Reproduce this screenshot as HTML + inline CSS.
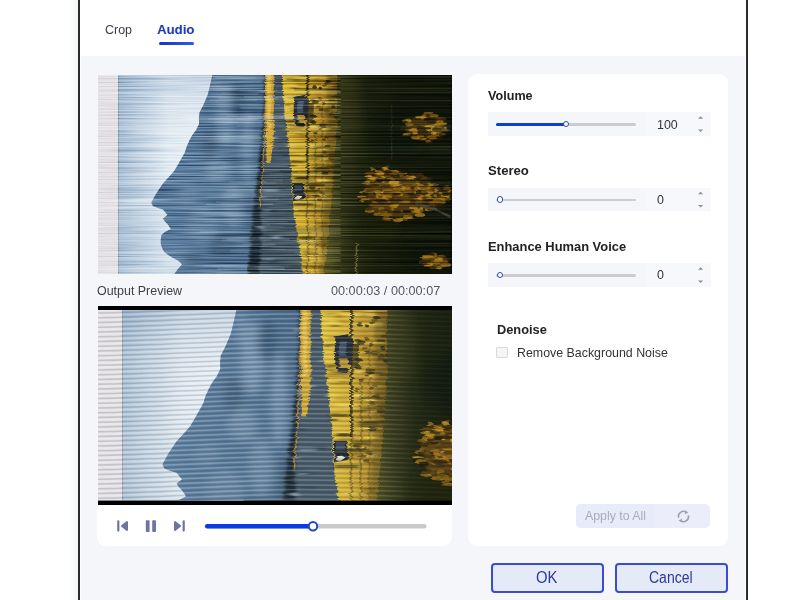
<!DOCTYPE html>
<html>
<head>
<meta charset="utf-8">
<title>Audio</title>
<style>
html,body{margin:0;padding:0;}
body{width:800px;height:600px;overflow:hidden;background:#fff;position:relative;font-family:"Liberation Sans",Arial,sans-serif;font-size:13px;color:#333;}
.abs{position:absolute;}
.t{position:absolute;white-space:nowrap;line-height:16px;transform-origin:left center;transform:scaleX(0.957);}
.b{font-weight:bold;color:#222;transform:scaleX(0.97);}
#shade{left:69px;top:0;width:9px;height:600px;background:linear-gradient(90deg,rgba(243,246,248,0),#f2f5f7);}
#bl{left:78px;top:0;width:2px;height:600px;background:#2b2b2b;}
#br{left:746px;top:0;width:2px;height:600px;background:#2b2b2b;}
#panel{left:81px;top:56px;width:664px;height:544px;background:#f5f6fa;}
#uline{left:159px;top:42px;width:35px;height:3px;border-radius:2px;background:linear-gradient(90deg,#1b33c4,#2c5fe6);}
.card{background:#fff;border-radius:9px;}
#rcard{left:468px;top:74px;width:260px;height:472.3px;}
#ctrl{left:97px;top:504.5px;width:355px;height:41.5px;background:#fff;border-radius:0 0 9px 9px;}
.row{position:absolute;left:488px;width:222.5px;height:23.8px;background:#f5f6fa;}
.num{position:absolute;left:646.5px;width:64px;height:23.8px;background:#f7f8fc;}
.trk{position:absolute;left:496px;width:140px;height:2.8px;border-radius:2px;background:#cbccd0;}
.fill{position:absolute;height:2.8px;border-radius:2px;background:#0c40d4;}
.th{position:absolute;width:4.8px;height:4.8px;border:1.7px solid #2b4aa8;border-radius:50%;background:#fff;}
.btn{position:absolute;box-sizing:border-box;border:2px solid #3b4ccc;border-radius:4px;background:#e4eaf8;height:30px;top:563px;}
</style>
</head>
<body>
<div id="shade" class="abs"></div>
<div id="bl" class="abs"></div>
<div id="br" class="abs"></div>
<div id="panel" class="abs"></div>

<!-- tabs -->
<span class="t" style="left:104.5px;top:22px;color:#3a3d44;">Crop</span>
<span class="t" style="left:157px;top:21.5px;font-weight:bold;color:#1b38b4;font-size:13.2px;transform:none;">Audio</span>
<div id="uline" class="abs"></div>

<!-- top video -->
<!--V1--><svg class="abs" style="left:97.5px;top:75px;" width="354.5" height="199" viewBox="0 0 355 199" preserveAspectRatio="none">
<defs>
<filter id="streak" x="0" y="0" width="100%" height="100%" color-interpolation-filters="sRGB">
<feTurbulence type="fractalNoise" baseFrequency="0.011 0.7" numOctaves="2" seed="11" result="n"/>
<feColorMatrix in="n" type="matrix" values="1.35 0 0 0 -0.175  1.35 0 0 0 -0.175  1.35 0 0 0 -0.175  0 0 0 0 1" result="g"/>
<feBlend in="g" in2="SourceGraphic" mode="soft-light"/>
</filter>
<filter id="streakr" x="0" y="0" width="100%" height="100%" color-interpolation-filters="sRGB">
<feTurbulence type="fractalNoise" baseFrequency="0.004 0.6" numOctaves="2" seed="11" result="n"/>
<feColorMatrix in="n" type="matrix" values="1.0 0 0 0 -0.08  1.0 0 0 0 -0.08  1.0 0 0 0 -0.08  0 0 0 0 1" result="g"/>
<feBlend in="g" in2="SourceGraphic" mode="soft-light"/>
</filter>
<clipPath id="cl"><rect x="0" y="0" width="244" height="199"/></clipPath>
<clipPath id="cr"><rect x="243" y="0" width="112" height="199"/></clipPath>
<symbol id="scene" viewBox="0 0 355 199" preserveAspectRatio="none">
<defs>
<linearGradient id="gsky" x1="0" y1="0" x2="1" y2="0">
<stop offset="0" stop-color="#a4bbd2"/><stop offset="0.22" stop-color="#bfd0e0"/><stop offset="0.5" stop-color="#dfe9f1"/><stop offset="1" stop-color="#eaf0f6"/>
</linearGradient>
<linearGradient id="gsky2" x1="0" y1="0" x2="0" y2="1">
<stop offset="0" stop-color="#829fbd" stop-opacity="0.35"/><stop offset="0.3" stop-color="#ffffff" stop-opacity="0.1"/><stop offset="0.6" stop-color="#ffffff" stop-opacity="0.15"/><stop offset="1" stop-color="#a9bfd4" stop-opacity="0.3"/>
</linearGradient>
<linearGradient id="gmt" x1="0" y1="0" x2="1" y2="0">
<stop offset="0" stop-color="#5f81a2"/><stop offset="0.5" stop-color="#557696"/><stop offset="1" stop-color="#43607e"/>
</linearGradient>
<linearGradient id="gyel" x1="0" y1="0" x2="1" y2="0">
<stop offset="0" stop-color="#e2c43c"/><stop offset="0.4" stop-color="#d2b034"/><stop offset="0.7" stop-color="#b48e2a"/><stop offset="1" stop-color="#846820"/>
</linearGradient>
<linearGradient id="ggrn" x1="0" y1="0" x2="1" y2="0">
<stop offset="0" stop-color="#5a5622"/><stop offset="0.1" stop-color="#42441e"/><stop offset="0.22" stop-color="#2b3016"/><stop offset="0.35" stop-color="#1e2410"/><stop offset="0.6" stop-color="#171c0d"/><stop offset="1" stop-color="#13180c"/>
</linearGradient>
<filter id="blur1" x="-10%" y="-10%" width="120%" height="120%"><feGaussianBlur stdDeviation="1.2 0.5"/></filter>
<filter id="blur3" x="-20%" y="-20%" width="140%" height="140%"><feGaussianBlur stdDeviation="4 3"/></filter>
<filter id="hblur" x="-10%" y="-10%" width="120%" height="120%"><feGaussianBlur stdDeviation="2.2 0.4"/></filter>
<filter id="disp" x="0" y="0" width="100%" height="100%" color-interpolation-filters="sRGB">
<feTurbulence type="fractalNoise" baseFrequency="0.003 0.85" numOctaves="1" seed="4" result="n"/>
<feColorMatrix in="n" type="matrix" values="0 0 0 0 0.5  1.6 0 0 0 -0.3  0 0 0 0 0.5  0 0 0 0 1" result="dm"/>
<feDisplacementMap in="SourceGraphic" in2="dm" scale="3.5" xChannelSelector="G" yChannelSelector="R"/>
</filter>
</defs>
<rect width="355" height="199" fill="#171c0e"/>
<rect x="0" y="0" width="20.3" height="199" fill="#e5e2e6"/>
<rect x="20.3" y="0" width="100" height="199" fill="url(#gsky)"/>
<rect x="20.3" y="0" width="100" height="199" fill="url(#gsky2)"/>
<polygon points="114.5,0.0 112.5,9.0 110.0,19.5 105.5,30.0 101.6,37.5 101.0,43.0 101.2,48.8 98.5,54.5 94.5,60.0 92.0,64.5 89.0,71.0 87.0,77.3 81.0,88.0 76.3,96.0 70.0,103.0 65.0,108.5 58.0,119.0 53.3,127.6 54.9,131.0 60.0,133.0 65.0,134.4 69.5,140.0 65.0,143.4 67.0,146.5 69.5,149.0 72.9,154.0 67.0,157.0 63.5,160.0 62.8,164.8 62.8,169.0 63.9,172.6 66.0,176.5 69.5,179.4 75.0,183.0 80.8,186.0 84.1,189.5 80.0,194.0 76.3,199.0 200.0,199.0 200.0,0.0" fill="url(#gmt)"/>
<clipPath id="cm"><polygon points="114.5,0.0 112.5,9.0 110.0,19.5 105.5,30.0 101.6,37.5 101.0,43.0 101.2,48.8 98.5,54.5 94.5,60.0 92.0,64.5 89.0,71.0 87.0,77.3 81.0,88.0 76.3,96.0 70.0,103.0 65.0,108.5 58.0,119.0 53.3,127.6 54.9,131.0 60.0,133.0 65.0,134.4 69.5,140.0 65.0,143.4 67.0,146.5 69.5,149.0 72.9,154.0 67.0,157.0 63.5,160.0 62.8,164.8 62.8,169.0 63.9,172.6 66.0,176.5 69.5,179.4 75.0,183.0 80.8,186.0 84.1,189.5 80.0,194.0 76.3,199.0 200.0,199.0 200.0,0.0"/></clipPath>
<g clip-path="url(#cm)"><g filter="url(#blur3)" opacity="0.6">
<ellipse cx="128" cy="40" rx="10" ry="30" fill="#8ba5be"/>
<ellipse cx="150" cy="75" rx="7" ry="40" fill="#8aa4bd"/>
<ellipse cx="120" cy="95" rx="12" ry="14" fill="#7f9ab4"/>
<ellipse cx="105" cy="150" rx="16" ry="18" fill="#7590ab"/>
<ellipse cx="135" cy="130" rx="10" ry="25" fill="#7d97b1"/>
<ellipse cx="118" cy="15" rx="5" ry="14" fill="#7f9ab5"/>
<ellipse cx="90" cy="120" rx="10" ry="10" fill="#6f8ba7"/>
<ellipse cx="140" cy="25" rx="8" ry="18" fill="#33506b"/>
<ellipse cx="112" cy="70" rx="8" ry="14" fill="#3d5872"/>
<ellipse cx="125" cy="170" rx="14" ry="12" fill="#3f5a74"/>
<ellipse cx="95" cy="185" rx="10" ry="8" fill="#46617b"/>
<ellipse cx="155" cy="150" rx="6" ry="30" fill="#3a546c"/>
</g></g>
<g filter="url(#disp)">
<rect x="235" y="0" width="120" height="199" fill="#171c0e"/>
<polygon points="167.0,0.0 185.5,0.0 192.0,70.0 194.5,100.0 196.5,130.0 200.5,160.0 206.5,199.0 150.0,199.0 152.0,165.0 158.0,128.0 163.0,80.0 166.0,40.0" fill="#485a68"/>
<polygon points="166.5,0.0 168.0,0.0 167.5,40.0 165.5,80.0 163.5,128.0 163.0,165.0 161.5,199.0 150.0,199.0 153.0,165.0 156.5,128.0 160.5,95.0 164.0,60.0 166.0,30.0" fill="#1f2c35" filter="url(#blur1)"/>
<path d="M168.3 0 Q167.5 60 162.5 133" stroke="#c08a30" stroke-width="1.3" fill="none" opacity="0.85"/>
<g filter="url(#hblur)" opacity="0.6">
<rect x="163.6" y="66.5" width="10.9" height="2.6" fill="#8ea2b2"/>
<rect x="174.9" y="22.9" width="13.2" height="1.1" fill="#7a90a2"/>
<rect x="161.0" y="87.4" width="5.8" height="1.1" fill="#9fb0bd"/>
<rect x="179.3" y="112.4" width="10.7" height="2.9" fill="#2f4152"/>
<rect x="167.1" y="114.6" width="13.8" height="2.1" fill="#8ea2b2"/>
<rect x="171.0" y="30.3" width="9.9" height="1.6" fill="#2f4152"/>
<rect x="160.5" y="160.1" width="10.2" height="1.4" fill="#33485a"/>
<rect x="177.7" y="23.5" width="10.1" height="1.4" fill="#2f4152"/>
<rect x="167.0" y="134.3" width="7.8" height="2.8" fill="#2f4152"/>
<rect x="165.5" y="73.7" width="6.6" height="1.2" fill="#7a90a2"/>
<rect x="171.4" y="62.0" width="8.1" height="1.6" fill="#9fb0bd"/>
<rect x="157.9" y="191.2" width="8.8" height="1.3" fill="#3b5062"/>
<rect x="159.9" y="97.9" width="11.0" height="2.1" fill="#2f4152"/>
<rect x="163.0" y="171.3" width="11.3" height="2.0" fill="#2f4152"/>
<rect x="158.2" y="156.4" width="5.8" height="1.9" fill="#3b5062"/>
<rect x="159.1" y="131.2" width="11.3" height="2.2" fill="#33485a"/>
<rect x="167.4" y="134.4" width="11.4" height="1.7" fill="#33485a"/>
<rect x="163.4" y="183.7" width="10.5" height="1.1" fill="#9fb0bd"/>
<rect x="159.8" y="151.0" width="7.2" height="2.8" fill="#9fb0bd"/>
<rect x="162.7" y="99.3" width="8.6" height="2.8" fill="#3b5062"/>
<rect x="175.5" y="160.7" width="7.5" height="3.0" fill="#9fb0bd"/>
<rect x="166.0" y="134.7" width="7.1" height="1.4" fill="#8ea2b2"/>
<rect x="166.2" y="49.1" width="9.4" height="1.4" fill="#2f4152"/>
<rect x="163.9" y="58.6" width="9.8" height="2.1" fill="#2f4152"/>
<rect x="170.7" y="186.1" width="9.6" height="2.3" fill="#2f4152"/>
<rect x="167.2" y="145.6" width="12.8" height="2.6" fill="#33485a"/>
<rect x="168.6" y="79.6" width="5.9" height="1.8" fill="#33485a"/>
<rect x="183.0" y="41.2" width="9.0" height="1.7" fill="#8ea2b2"/>
<rect x="162.4" y="15.0" width="6.4" height="2.9" fill="#8ea2b2"/>
<rect x="159.7" y="121.6" width="6.9" height="1.3" fill="#9fb0bd"/>
</g>
<polygon points="167.5,0 176,0 176,62 173,88 169,88 168,62" fill="#cfa836"/>
<polygon points="169,0 173,0 173,55 170,55" fill="#ecc955" opacity="0.7"/>
<polygon points="184.0,0.0 239.5,0.0 239.5,50.0 237.0,90.0 234.0,130.0 230.5,165.0 226.5,199.0 205.5,199.0 199.5,160.0 195.5,130.0 193.5,100.0 191.0,70.0 187.0,40.0" fill="url(#gyel)"/>
<g filter="url(#hblur)">
<rect x="201.4" y="50.2" width="11.9" height="2.1" fill="#edcc44" opacity="0.45"/>
<rect x="211.5" y="194.6" width="10.9" height="1.8" fill="#e6c03a" opacity="0.45"/>
<rect x="222.6" y="52.7" width="8.1" height="3.1" fill="#f2d650" opacity="0.49"/>
<rect x="216.1" y="72.0" width="18.7" height="2.4" fill="#332d12" opacity="0.53"/>
<rect x="224.9" y="18.1" width="13.5" height="1.5" fill="#e6c03a" opacity="0.56"/>
<rect x="209.1" y="107.8" width="17.1" height="3.2" fill="#574614" opacity="0.77"/>
<rect x="217.9" y="169.7" width="10.5" height="1.4" fill="#a87a22" opacity="0.76"/>
<rect x="217.2" y="98.1" width="15.9" height="1.4" fill="#9a7820" opacity="0.61"/>
<rect x="204.2" y="120.4" width="20.4" height="3.1" fill="#a87a22" opacity="0.84"/>
<rect x="196.9" y="72.6" width="9.3" height="2.1" fill="#b8902a" opacity="0.55"/>
<rect x="213.8" y="196.1" width="5.0" height="2.4" fill="#8a6c1c" opacity="0.55"/>
<rect x="201.6" y="166.1" width="12.4" height="2.1" fill="#a87a22" opacity="0.74"/>
<rect x="221.4" y="35.5" width="11.3" height="1.9" fill="#a87a22" opacity="0.58"/>
<rect x="215.9" y="188.4" width="8.2" height="2.3" fill="#e6c03a" opacity="0.41"/>
<rect x="214.5" y="92.6" width="16.6" height="2.4" fill="#574614" opacity="0.84"/>
<rect x="210.3" y="69.7" width="7.5" height="2.6" fill="#f2d650" opacity="0.76"/>
<rect x="220.1" y="20.5" width="7.6" height="1.5" fill="#b8902a" opacity="0.77"/>
<rect x="199.0" y="50.1" width="9.6" height="2.2" fill="#574614" opacity="0.55"/>
<rect x="200.2" y="166.0" width="19.1" height="2.8" fill="#f4dc62" opacity="0.70"/>
<rect x="220.6" y="102.8" width="12.2" height="2.2" fill="#e6c03a" opacity="0.64"/>
<rect x="205.4" y="3.7" width="8.5" height="1.3" fill="#f2d650" opacity="0.75"/>
<rect x="213.7" y="28.2" width="7.3" height="2.1" fill="#f2d650" opacity="0.55"/>
<rect x="218.8" y="110.5" width="7.0" height="1.4" fill="#332d12" opacity="0.43"/>
<rect x="188.5" y="8.4" width="13.6" height="3.0" fill="#f2d650" opacity="0.74"/>
<rect x="212.9" y="88.2" width="14.6" height="1.6" fill="#332d12" opacity="0.49"/>
<rect x="219.9" y="101.1" width="13.0" height="2.9" fill="#b8902a" opacity="0.71"/>
<rect x="206.8" y="187.5" width="15.6" height="1.3" fill="#b8902a" opacity="0.78"/>
<rect x="205.4" y="24.2" width="6.4" height="1.5" fill="#b8902a" opacity="0.59"/>
<rect x="192.1" y="60.3" width="19.8" height="1.8" fill="#a87a22" opacity="0.69"/>
<rect x="192.1" y="50.4" width="13.9" height="1.9" fill="#a87a22" opacity="0.83"/>
<rect x="226.8" y="97.0" width="6.4" height="3.2" fill="#e6c03a" opacity="0.72"/>
<rect x="205.3" y="80.4" width="11.8" height="1.0" fill="#edcc44" opacity="0.72"/>
<rect x="207.0" y="110.3" width="5.3" height="1.6" fill="#6e5614" opacity="0.63"/>
<rect x="204.4" y="191.2" width="22.5" height="1.2" fill="#b8902a" opacity="0.84"/>
<rect x="188.0" y="52.8" width="19.8" height="2.8" fill="#9a7820" opacity="0.74"/>
<rect x="214.9" y="169.1" width="13.5" height="3.0" fill="#4a3c12" opacity="0.47"/>
<rect x="215.9" y="113.5" width="6.7" height="1.4" fill="#f2d650" opacity="0.76"/>
<rect x="206.2" y="178.2" width="5.3" height="1.2" fill="#edcc44" opacity="0.76"/>
<rect x="200.9" y="170.4" width="21.4" height="3.2" fill="#f4dc62" opacity="0.41"/>
<rect x="224.8" y="83.1" width="9.3" height="1.5" fill="#f2d650" opacity="0.64"/>
<rect x="192.0" y="21.8" width="6.0" height="2.4" fill="#b8902a" opacity="0.82"/>
<rect x="198.5" y="105.7" width="13.5" height="1.8" fill="#8a6c1c" opacity="0.48"/>
<rect x="196.0" y="3.6" width="5.3" height="3.2" fill="#a87a22" opacity="0.63"/>
<rect x="199.7" y="102.3" width="13.5" height="2.0" fill="#8a6c1c" opacity="0.77"/>
<rect x="221.0" y="98.5" width="12.1" height="1.5" fill="#332d12" opacity="0.54"/>
<rect x="194.6" y="45.7" width="21.8" height="1.9" fill="#a87a22" opacity="0.69"/>
<rect x="189.8" y="69.2" width="7.5" height="2.9" fill="#edcc44" opacity="0.68"/>
<rect x="191.3" y="85.7" width="17.6" height="2.5" fill="#4a3c12" opacity="0.79"/>
<rect x="197.0" y="56.1" width="10.6" height="1.6" fill="#f4dc62" opacity="0.48"/>
<rect x="201.7" y="0.7" width="11.2" height="1.1" fill="#332d12" opacity="0.55"/>
<rect x="204.9" y="175.6" width="8.5" height="2.0" fill="#6e5614" opacity="0.57"/>
<rect x="197.9" y="100.1" width="14.6" height="2.8" fill="#f2d650" opacity="0.44"/>
<rect x="212.2" y="28.6" width="12.5" height="1.5" fill="#9a7820" opacity="0.54"/>
<rect x="210.2" y="116.5" width="19.3" height="2.7" fill="#8a6c1c" opacity="0.80"/>
<rect x="218.0" y="118.7" width="13.8" height="2.6" fill="#f4dc62" opacity="0.47"/>
<rect x="195.2" y="128.0" width="20.9" height="2.6" fill="#332d12" opacity="0.68"/>
<rect x="201.6" y="161.6" width="15.0" height="2.8" fill="#332d12" opacity="0.66"/>
<rect x="217.7" y="3.2" width="20.2" height="2.5" fill="#a87a22" opacity="0.71"/>
<rect x="187.1" y="45.8" width="7.5" height="1.8" fill="#6e5614" opacity="0.83"/>
<rect x="191.5" y="89.8" width="5.4" height="2.1" fill="#332d12" opacity="0.71"/>
<rect x="223.4" y="0.7" width="16.1" height="1.2" fill="#332d12" opacity="0.80"/>
<rect x="217.6" y="104.7" width="14.0" height="1.5" fill="#edcc44" opacity="0.78"/>
<rect x="202.9" y="150.5" width="17.3" height="1.8" fill="#f4dc62" opacity="0.62"/>
<rect x="215.5" y="95.3" width="17.7" height="1.4" fill="#574614" opacity="0.68"/>
<rect x="203.7" y="119.3" width="17.4" height="2.2" fill="#a87a22" opacity="0.54"/>
<rect x="186.5" y="2.5" width="10.1" height="1.5" fill="#8a6c1c" opacity="0.44"/>
<rect x="216.4" y="97.4" width="10.4" height="1.3" fill="#f4dc62" opacity="0.61"/>
<rect x="204.7" y="177.8" width="23.2" height="2.0" fill="#f4dc62" opacity="0.41"/>
<rect x="222.1" y="163.2" width="6.8" height="3.0" fill="#9a7820" opacity="0.57"/>
<rect x="202.9" y="185.2" width="6.7" height="3.1" fill="#a87a22" opacity="0.64"/>
<rect x="223.3" y="26.4" width="14.5" height="1.5" fill="#edcc44" opacity="0.72"/>
<rect x="210.9" y="178.6" width="5.5" height="2.5" fill="#f2d650" opacity="0.83"/>
<rect x="217.4" y="80.7" width="12.9" height="2.8" fill="#4a3c12" opacity="0.54"/>
<rect x="221.0" y="0.3" width="18.5" height="1.4" fill="#edcc44" opacity="0.82"/>
<rect x="220.4" y="2.3" width="9.8" height="3.2" fill="#edcc44" opacity="0.58"/>
<rect x="204.6" y="117.2" width="13.1" height="1.6" fill="#9a7820" opacity="0.78"/>
<rect x="216.2" y="10.3" width="17.1" height="1.6" fill="#e6c03a" opacity="0.51"/>
<rect x="197.6" y="101.7" width="12.1" height="2.8" fill="#4a3c12" opacity="0.80"/>
<rect x="222.5" y="125.5" width="8.8" height="1.2" fill="#332d12" opacity="0.49"/>
<rect x="209.7" y="185.8" width="16.7" height="1.6" fill="#e6c03a" opacity="0.69"/>
<rect x="229.3" y="9.7" width="7.4" height="1.6" fill="#f4dc62" opacity="0.59"/>
<rect x="218.7" y="50.9" width="17.4" height="1.7" fill="#4a3c12" opacity="0.70"/>
<rect x="205.4" y="110.9" width="8.2" height="2.1" fill="#e6c03a" opacity="0.43"/>
<rect x="211.8" y="161.6" width="13.6" height="2.0" fill="#6e5614" opacity="0.85"/>
<rect x="193.6" y="27.8" width="6.7" height="1.7" fill="#6e5614" opacity="0.65"/>
<rect x="220.9" y="73.3" width="8.8" height="1.9" fill="#f2d650" opacity="0.74"/>
<rect x="209.4" y="82.4" width="12.2" height="2.1" fill="#6e5614" opacity="0.74"/>
<rect x="204.4" y="114.3" width="18.0" height="2.9" fill="#332d12" opacity="0.68"/>
<rect x="197.8" y="43.0" width="9.7" height="2.0" fill="#4a3c12" opacity="0.69"/>
<rect x="221.6" y="62.1" width="13.9" height="2.6" fill="#e6c03a" opacity="0.41"/>
<rect x="210.6" y="178.2" width="16.2" height="3.0" fill="#f2d650" opacity="0.43"/>
<rect x="212.0" y="184.7" width="13.9" height="1.2" fill="#f4dc62" opacity="0.51"/>
<rect x="209.1" y="30.7" width="18.0" height="2.9" fill="#a87a22" opacity="0.72"/>
<rect x="202.3" y="178.1" width="19.8" height="1.5" fill="#f2d650" opacity="0.75"/>
<rect x="214.3" y="183.1" width="10.8" height="2.2" fill="#e6c03a" opacity="0.68"/>
<rect x="218.7" y="87.0" width="6.9" height="2.3" fill="#9a7820" opacity="0.64"/>
<rect x="197.3" y="77.2" width="16.4" height="3.2" fill="#f2d650" opacity="0.64"/>
<rect x="200.2" y="55.4" width="20.9" height="1.5" fill="#b8902a" opacity="0.61"/>
<rect x="228.5" y="49.2" width="7.7" height="1.4" fill="#9a7820" opacity="0.42"/>
<rect x="214.3" y="176.1" width="6.5" height="3.0" fill="#b8902a" opacity="0.70"/>
<rect x="187.2" y="45.1" width="11.4" height="1.9" fill="#4a3c12" opacity="0.56"/>
<rect x="198.1" y="1.3" width="21.1" height="3.1" fill="#edcc44" opacity="0.49"/>
<rect x="221.8" y="62.0" width="9.4" height="3.0" fill="#b8902a" opacity="0.52"/>
<rect x="214.1" y="21.7" width="16.6" height="3.0" fill="#b8902a" opacity="0.62"/>
<rect x="212.9" y="11.2" width="22.5" height="3.1" fill="#f2d650" opacity="0.50"/>
<rect x="187.0" y="28.2" width="6.1" height="2.6" fill="#4a3c12" opacity="0.60"/>
<rect x="191.8" y="62.5" width="6.5" height="1.4" fill="#e6c03a" opacity="0.55"/>
<rect x="216.3" y="186.2" width="5.6" height="2.8" fill="#8a6c1c" opacity="0.73"/>
<rect x="210.9" y="196.0" width="7.1" height="1.8" fill="#edcc44" opacity="0.53"/>
<rect x="204.5" y="190.1" width="22.6" height="2.7" fill="#b8902a" opacity="0.57"/>
<rect x="221.1" y="61.4" width="6.7" height="1.8" fill="#a87a22" opacity="0.61"/>
<rect x="205.1" y="183.0" width="11.9" height="1.9" fill="#f4dc62" opacity="0.41"/>
<rect x="217.2" y="161.6" width="5.8" height="2.8" fill="#f2d650" opacity="0.61"/>
<rect x="193.3" y="12.3" width="6.2" height="1.6" fill="#574614" opacity="0.55"/>
<rect x="213.8" y="190.6" width="10.0" height="3.0" fill="#a87a22" opacity="0.71"/>
<rect x="217.7" y="59.2" width="16.3" height="1.1" fill="#8a6c1c" opacity="0.83"/>
<rect x="201.1" y="164.4" width="18.6" height="1.9" fill="#f4dc62" opacity="0.83"/>
<rect x="205.0" y="50.0" width="14.4" height="2.8" fill="#f4dc62" opacity="0.48"/>
<rect x="219.0" y="147.0" width="10.9" height="2.9" fill="#574614" opacity="0.51"/>
<rect x="219.3" y="91.7" width="14.2" height="2.7" fill="#332d12" opacity="0.49"/>
<rect x="188.8" y="49.2" width="5.6" height="1.4" fill="#332d12" opacity="0.65"/>
<rect x="193.2" y="84.9" width="6.4" height="1.2" fill="#574614" opacity="0.44"/>
<rect x="216.4" y="99.2" width="13.5" height="2.0" fill="#b8902a" opacity="0.46"/>
<rect x="205.4" y="177.4" width="15.2" height="2.7" fill="#8a6c1c" opacity="0.74"/>
<rect x="198.7" y="58.5" width="10.1" height="1.4" fill="#9a7820" opacity="0.73"/>
<rect x="196.8" y="49.2" width="7.9" height="1.1" fill="#574614" opacity="0.48"/>
<rect x="196.9" y="50.1" width="15.0" height="2.4" fill="#8a6c1c" opacity="0.76"/>
<rect x="205.0" y="197.2" width="14.0" height="3.0" fill="#b8902a" opacity="0.78"/>
<rect x="198.1" y="8.0" width="7.3" height="2.8" fill="#b8902a" opacity="0.67"/>
<rect x="188.6" y="38.6" width="14.7" height="1.6" fill="#e6c03a" opacity="0.60"/>
</g>
<polygon points="229,0 240,0 240,55 238,100 234,155 229,199 221,199 225,155 228,100 229,55" fill="#26280f" opacity="0.25" filter="url(#blur1)"/>
<rect x="208.6" y="0" width="2.2" height="105" fill="#2b2a14" opacity="0.85"/>
<rect x="209" y="105" width="1.6" height="94" fill="#3a3616" opacity="0.5"/>
<rect x="217" y="60" width="1.6" height="139" fill="#3a3616" opacity="0.4"/>
<rect x="224" y="30" width="1.4" height="150" fill="#3a3616" opacity="0.35"/>
<path d="M196.5 22 Q195 35 197.5 51 L206 52 L207 45 L211 45 L211 24 L206 20 Z" fill="#262b33"/>
<rect x="199.5" y="26" width="6" height="12" fill="#44546a"/>
<rect x="200" y="40" width="7.5" height="8" fill="#b89230"/>
<rect x="211" y="28" width="5" height="20" fill="#3a3416" opacity="0.8"/>
<path d="M195 108 L206 108 L207.5 124 L196 126 Z" fill="#232a30"/>
<rect x="197" y="110" width="8" height="6" fill="#3d4d5e"/>
<ellipse cx="200.5" cy="122.5" rx="3.2" ry="2" fill="#e2dfd5"/>
<ellipse cx="238.5" cy="98.3" rx="3.1" ry="1.7" fill="#3a3212" opacity="0.8"/>
<ellipse cx="214.0" cy="47.0" rx="1.9" ry="1.0" fill="#2a2a12" opacity="0.8"/>
<ellipse cx="229.2" cy="35.6" rx="3.5" ry="1.8" fill="#4f3f12" opacity="0.8"/>
<ellipse cx="223.0" cy="54.1" rx="1.7" ry="0.8" fill="#2a2a12" opacity="0.8"/>
<ellipse cx="226.1" cy="64.5" rx="1.8" ry="1.3" fill="#5b4814" opacity="0.8"/>
<ellipse cx="230.3" cy="71.0" rx="3.1" ry="1.3" fill="#3a3212" opacity="0.8"/>
<ellipse cx="239.7" cy="37.5" rx="2.5" ry="0.9" fill="#2a2a12" opacity="0.8"/>
<ellipse cx="236.9" cy="94.4" rx="2.5" ry="1.8" fill="#5b4814" opacity="0.8"/>
<ellipse cx="222.8" cy="124.6" rx="2.5" ry="1.3" fill="#4f3f12" opacity="0.8"/>
<ellipse cx="224.7" cy="118.0" rx="2.6" ry="1.8" fill="#4f3f12" opacity="0.8"/>
<ellipse cx="236.8" cy="53.7" rx="3.4" ry="1.0" fill="#5b4814" opacity="0.8"/>
<ellipse cx="216.8" cy="11.2" rx="1.7" ry="1.5" fill="#5b4814" opacity="0.8"/>
<ellipse cx="226.6" cy="49.5" rx="2.4" ry="1.0" fill="#4f3f12" opacity="0.8"/>
<ellipse cx="214.8" cy="25.6" rx="2.7" ry="1.8" fill="#5b4814" opacity="0.8"/>
<ellipse cx="218.3" cy="121.0" rx="3.6" ry="0.9" fill="#4f3f12" opacity="0.8"/>
<ellipse cx="221.5" cy="114.5" rx="1.7" ry="1.7" fill="#5b4814" opacity="0.8"/>
<ellipse cx="237.1" cy="87.6" rx="3.1" ry="1.5" fill="#4f3f12" opacity="0.8"/>
<ellipse cx="225.8" cy="28.5" rx="1.6" ry="1.9" fill="#4f3f12" opacity="0.8"/>
<ellipse cx="222.7" cy="23.8" rx="2.1" ry="1.7" fill="#4f3f12" opacity="0.8"/>
<ellipse cx="214.1" cy="112.7" rx="3.2" ry="1.2" fill="#3a3212" opacity="0.8"/>
<ellipse cx="225.3" cy="51.8" rx="3.1" ry="1.2" fill="#2a2a12" opacity="0.8"/>
<ellipse cx="223.5" cy="34.9" rx="2.6" ry="1.3" fill="#2a2a12" opacity="0.8"/>
<ellipse cx="229.7" cy="7.8" rx="2.7" ry="1.3" fill="#5b4814" opacity="0.8"/>
<ellipse cx="235.1" cy="79.2" rx="3.5" ry="1.3" fill="#4f3f12" opacity="0.8"/>
<ellipse cx="222.7" cy="13.1" rx="1.7" ry="1.3" fill="#2a2a12" opacity="0.8"/>
<ellipse cx="214.1" cy="66.2" rx="1.7" ry="1.7" fill="#4f3f12" opacity="0.8"/>
<ellipse cx="226.8" cy="98.3" rx="3.4" ry="1.9" fill="#3a3212" opacity="0.8"/>
<ellipse cx="234.2" cy="83.3" rx="3.6" ry="2.0" fill="#3a3212" opacity="0.8"/>
<ellipse cx="235.0" cy="92.9" rx="1.8" ry="1.9" fill="#4f3f12" opacity="0.8"/>
<ellipse cx="234.9" cy="39.5" rx="3.2" ry="1.7" fill="#4f3f12" opacity="0.8"/>
<ellipse cx="235.5" cy="31.5" rx="1.9" ry="1.9" fill="#2a2a12" opacity="0.8"/>
<ellipse cx="235.0" cy="38.0" rx="2.1" ry="2.0" fill="#4f3f12" opacity="0.8"/>
<ellipse cx="229.0" cy="62.6" rx="2.3" ry="0.8" fill="#4f3f12" opacity="0.8"/>
<ellipse cx="217.4" cy="26.9" rx="3.2" ry="1.9" fill="#2a2a12" opacity="0.8"/>
<ellipse cx="234.2" cy="25.2" rx="3.4" ry="0.9" fill="#3a3212" opacity="0.8"/>
<ellipse cx="239.1" cy="108.0" rx="2.9" ry="1.5" fill="#5b4814" opacity="0.8"/>
<ellipse cx="215.8" cy="110.9" rx="3.3" ry="1.2" fill="#5b4814" opacity="0.8"/>
<ellipse cx="223.0" cy="50.1" rx="2.4" ry="1.7" fill="#4f3f12" opacity="0.8"/>
<ellipse cx="217.8" cy="58.1" rx="2.2" ry="1.4" fill="#3a3212" opacity="0.8"/>
<ellipse cx="239.1" cy="42.2" rx="3.3" ry="1.7" fill="#2a2a12" opacity="0.8"/>
<ellipse cx="220.9" cy="31.6" rx="2.5" ry="1.2" fill="#5b4814" opacity="0.8"/>
<ellipse cx="226.2" cy="10.7" rx="1.6" ry="0.8" fill="#3a3212" opacity="0.8"/>
<ellipse cx="215.9" cy="47.6" rx="2.8" ry="1.3" fill="#2a2a12" opacity="0.8"/>
<ellipse cx="216.6" cy="41.1" rx="3.1" ry="1.4" fill="#2a2a12" opacity="0.8"/>
<ellipse cx="238.3" cy="21.2" rx="3.3" ry="1.3" fill="#4f3f12" opacity="0.8"/>
<ellipse cx="216.9" cy="12.6" rx="2.5" ry="1.1" fill="#2a2a12" opacity="0.8"/>
<ellipse cx="230.4" cy="6.4" rx="3.0" ry="1.5" fill="#2a2a12" opacity="0.8"/>
<ellipse cx="227.0" cy="77.2" rx="2.1" ry="1.9" fill="#5b4814" opacity="0.8"/>
<ellipse cx="227.4" cy="10.3" rx="2.0" ry="1.0" fill="#5b4814" opacity="0.8"/>
<ellipse cx="215.8" cy="114.4" rx="1.9" ry="1.0" fill="#4f3f12" opacity="0.8"/>
<polygon points="239.5,0.0 355.0,0.0 355.0,199.0 226.5,199.0 230.5,165.0 234.0,130.0 237.0,90.0 239.5,50.0" fill="url(#ggrn)"/>
<g filter="url(#blur3)" opacity="0.5">
<ellipse cx="252" cy="30" rx="10" ry="30" fill="#3c3c1b"/>
<ellipse cx="248" cy="100" rx="8" ry="40" fill="#34351a"/>
<ellipse cx="300" cy="60" rx="30" ry="25" fill="#0f130a"/>
<ellipse cx="330" cy="180" rx="25" ry="15" fill="#0e1209"/>
<ellipse cx="280" cy="150" rx="20" ry="20" fill="#23270f"/>
<ellipse cx="258" cy="185" rx="16" ry="10" fill="#2b2e15"/>
</g>
<rect x="293.5" y="30" width="1.2" height="55" fill="#33361e" opacity="0.7"/>
<rect x="258" y="168" width="1.6" height="31" fill="#9a8448" opacity="0.7"/>
<ellipse cx="327" cy="53" rx="18.7" ry="12.8" fill="#5a4212" opacity="0.8" filter="url(#blur1)"/>
<ellipse cx="340.5" cy="63.3" rx="4.6" ry="1.2" fill="#2a200c" opacity="0.85"/>
<ellipse cx="313.7" cy="54.6" rx="2.3" ry="1.5" fill="#866418" opacity="0.72"/>
<ellipse cx="327.1" cy="52.3" rx="3.3" ry="1.8" fill="#6c4e12" opacity="0.79"/>
<ellipse cx="336.9" cy="58.1" rx="1.6" ry="1.7" fill="#a87c1c" opacity="0.93"/>
<ellipse cx="319.5" cy="57.7" rx="3.2" ry="0.8" fill="#6c4e12" opacity="0.86"/>
<ellipse cx="342.2" cy="48.8" rx="2.9" ry="1.7" fill="#2a200c" opacity="0.93"/>
<ellipse cx="339.7" cy="48.7" rx="5.2" ry="2.1" fill="#986c18" opacity="0.62"/>
<ellipse cx="347.4" cy="52.3" rx="2.0" ry="1.3" fill="#34280e" opacity="0.92"/>
<ellipse cx="309.3" cy="59.4" rx="4.2" ry="1.2" fill="#b0801e" opacity="0.94"/>
<ellipse cx="305.7" cy="53.1" rx="3.1" ry="2.0" fill="#2a200c" opacity="0.65"/>
<ellipse cx="331.2" cy="43.8" rx="2.2" ry="1.6" fill="#1e1c0c" opacity="0.85"/>
<ellipse cx="342.3" cy="59.3" rx="1.9" ry="1.0" fill="#866418" opacity="0.70"/>
<ellipse cx="325.4" cy="42.8" rx="2.7" ry="2.0" fill="#b0801e" opacity="0.79"/>
<ellipse cx="319.9" cy="56.8" rx="3.5" ry="2.2" fill="#6c4e12" opacity="0.77"/>
<ellipse cx="333.8" cy="47.4" rx="3.6" ry="2.1" fill="#b0801e" opacity="0.69"/>
<ellipse cx="342.1" cy="46.5" rx="3.9" ry="1.8" fill="#866418" opacity="0.86"/>
<ellipse cx="335.9" cy="40.2" rx="4.5" ry="1.9" fill="#34280e" opacity="0.86"/>
<ellipse cx="332.9" cy="67.0" rx="3.4" ry="1.3" fill="#34280e" opacity="0.63"/>
<ellipse cx="311.7" cy="52.7" rx="2.9" ry="1.3" fill="#34280e" opacity="0.77"/>
<ellipse cx="329.9" cy="44.6" rx="3.9" ry="1.9" fill="#1e1c0c" opacity="0.62"/>
<ellipse cx="309.4" cy="46.0" rx="4.7" ry="1.9" fill="#c49a2a" opacity="0.56"/>
<ellipse cx="332.5" cy="51.6" rx="5.0" ry="1.4" fill="#c49a2a" opacity="0.65"/>
<ellipse cx="340.4" cy="60.5" rx="2.9" ry="0.9" fill="#b88a22" opacity="0.65"/>
<ellipse cx="344.0" cy="49.4" rx="4.1" ry="1.2" fill="#4e3a10" opacity="0.75"/>
<ellipse cx="336.3" cy="58.5" rx="2.9" ry="1.9" fill="#c49a2a" opacity="0.59"/>
<ellipse cx="339.7" cy="46.7" rx="2.3" ry="1.6" fill="#a87c1c" opacity="0.64"/>
<ellipse cx="323.7" cy="54.7" rx="5.3" ry="1.4" fill="#34280e" opacity="0.82"/>
<ellipse cx="317.1" cy="51.0" rx="5.4" ry="1.9" fill="#34280e" opacity="0.73"/>
<ellipse cx="323.2" cy="52.6" rx="4.2" ry="1.9" fill="#1e1c0c" opacity="0.80"/>
<ellipse cx="338.2" cy="56.0" rx="5.4" ry="2.0" fill="#c49a2a" opacity="0.58"/>
<ellipse cx="345.7" cy="59.6" rx="2.7" ry="1.0" fill="#b0801e" opacity="0.65"/>
<ellipse cx="347.6" cy="53.7" rx="1.7" ry="1.9" fill="#b0801e" opacity="0.73"/>
<ellipse cx="336.6" cy="40.7" rx="4.6" ry="1.7" fill="#a87c1c" opacity="0.70"/>
<ellipse cx="321.3" cy="58.6" rx="4.2" ry="1.4" fill="#6c4e12" opacity="0.75"/>
<ellipse cx="339.7" cy="49.4" rx="3.5" ry="0.8" fill="#b0801e" opacity="0.90"/>
<ellipse cx="329.4" cy="51.8" rx="2.3" ry="1.3" fill="#b0801e" opacity="0.86"/>
<ellipse cx="321.6" cy="58.9" rx="4.2" ry="2.0" fill="#34280e" opacity="0.69"/>
<ellipse cx="340.5" cy="44.6" rx="3.4" ry="2.2" fill="#6c4e12" opacity="0.58"/>
<ellipse cx="334.8" cy="54.4" rx="2.2" ry="1.6" fill="#c49a2a" opacity="0.85"/>
<ellipse cx="310.7" cy="44.9" rx="3.0" ry="1.3" fill="#c49a2a" opacity="0.64"/>
<ellipse cx="345.2" cy="48.4" rx="4.4" ry="1.5" fill="#b0801e" opacity="0.77"/>
<ellipse cx="330.5" cy="54.8" rx="1.8" ry="2.0" fill="#b88a22" opacity="0.88"/>
<ellipse cx="317.7" cy="62.9" rx="4.6" ry="1.3" fill="#b0801e" opacity="0.77"/>
<ellipse cx="307.3" cy="47.1" rx="3.0" ry="1.2" fill="#34280e" opacity="0.92"/>
<ellipse cx="315.8" cy="55.1" rx="4.6" ry="2.0" fill="#a87c1c" opacity="0.80"/>
<ellipse cx="341.1" cy="53.9" rx="4.8" ry="1.9" fill="#6c4e12" opacity="0.65"/>
<ellipse cx="341.2" cy="52.3" rx="2.0" ry="1.0" fill="#6c4e12" opacity="0.61"/>
<ellipse cx="335.2" cy="44.8" rx="5.4" ry="1.9" fill="#34280e" opacity="0.91"/>
<ellipse cx="324.0" cy="60.3" rx="3.4" ry="0.9" fill="#1e1c0c" opacity="0.68"/>
<ellipse cx="346.2" cy="55.3" rx="5.2" ry="1.8" fill="#4e3a10" opacity="0.73"/>
<ellipse cx="324.9" cy="56.5" rx="5.2" ry="2.2" fill="#2a200c" opacity="0.59"/>
<ellipse cx="330.8" cy="64.5" rx="5.4" ry="1.6" fill="#2a200c" opacity="0.81"/>
<ellipse cx="326.1" cy="64.0" rx="2.7" ry="1.1" fill="#986c18" opacity="0.88"/>
<ellipse cx="343.2" cy="59.9" rx="1.9" ry="1.6" fill="#4e3a10" opacity="0.93"/>
<ellipse cx="317.6" cy="58.3" rx="2.8" ry="1.2" fill="#b0801e" opacity="0.91"/>
<ellipse cx="322.9" cy="61.2" rx="3.7" ry="1.6" fill="#b0801e" opacity="0.59"/>
<ellipse cx="330.7" cy="66.2" rx="3.1" ry="1.2" fill="#986c18" opacity="0.84"/>
<ellipse cx="329.2" cy="53.2" rx="4.5" ry="1.3" fill="#2a200c" opacity="0.90"/>
<ellipse cx="335.8" cy="61.8" rx="4.7" ry="0.9" fill="#1e1c0c" opacity="0.62"/>
<ellipse cx="330.6" cy="38.3" rx="4.8" ry="1.2" fill="#986c18" opacity="0.83"/>
<ellipse cx="335.7" cy="43.0" rx="2.0" ry="1.1" fill="#34280e" opacity="0.91"/>
<ellipse cx="339.1" cy="54.7" rx="5.1" ry="1.9" fill="#34280e" opacity="0.89"/>
<ellipse cx="326.6" cy="40.5" rx="2.2" ry="1.4" fill="#b88a22" opacity="0.57"/>
<ellipse cx="334.1" cy="47.3" rx="4.6" ry="1.8" fill="#2a200c" opacity="0.87"/>
<ellipse cx="311.6" cy="49.6" rx="4.9" ry="1.4" fill="#866418" opacity="0.88"/>
<ellipse cx="334.3" cy="62.2" rx="4.7" ry="2.1" fill="#b0801e" opacity="0.56"/>
<ellipse cx="321.0" cy="42.3" rx="3.9" ry="1.0" fill="#c49a2a" opacity="0.71"/>
<ellipse cx="313.0" cy="59.8" rx="2.4" ry="0.8" fill="#34280e" opacity="0.68"/>
<ellipse cx="343.5" cy="44.0" rx="5.2" ry="1.7" fill="#6c4e12" opacity="0.65"/>
<ellipse cx="311.8" cy="53.3" rx="2.4" ry="1.4" fill="#34280e" opacity="0.79"/>
<ellipse cx="320" cy="108" rx="11.9" ry="8.5" fill="#5a4212" opacity="0.8" filter="url(#blur1)"/>
<ellipse cx="311.4" cy="102.0" rx="4.7" ry="2.1" fill="#1e1c0c" opacity="0.92"/>
<ellipse cx="329.4" cy="109.2" rx="5.3" ry="1.7" fill="#b88a22" opacity="0.60"/>
<ellipse cx="313.2" cy="109.0" rx="3.7" ry="1.6" fill="#a87c1c" opacity="0.84"/>
<ellipse cx="315.0" cy="110.3" rx="5.0" ry="1.3" fill="#986c18" opacity="0.61"/>
<ellipse cx="316.3" cy="105.6" rx="1.5" ry="2.0" fill="#6c4e12" opacity="0.86"/>
<ellipse cx="325.5" cy="107.0" rx="2.2" ry="1.2" fill="#6c4e12" opacity="0.77"/>
<ellipse cx="317.2" cy="103.9" rx="5.3" ry="1.8" fill="#866418" opacity="0.67"/>
<ellipse cx="316.3" cy="111.1" rx="2.1" ry="0.9" fill="#c49a2a" opacity="0.88"/>
<ellipse cx="310.7" cy="104.0" rx="4.3" ry="0.9" fill="#4e3a10" opacity="0.88"/>
<ellipse cx="312.2" cy="108.7" rx="3.4" ry="1.8" fill="#a87c1c" opacity="0.65"/>
<ellipse cx="332.7" cy="104.4" rx="2.9" ry="1.4" fill="#34280e" opacity="0.87"/>
<ellipse cx="312.9" cy="113.7" rx="1.5" ry="0.9" fill="#b88a22" opacity="0.80"/>
<ellipse cx="324.6" cy="107.0" rx="2.5" ry="1.9" fill="#2a200c" opacity="0.69"/>
<ellipse cx="313.8" cy="113.7" rx="4.6" ry="1.0" fill="#4e3a10" opacity="0.89"/>
<ellipse cx="333.3" cy="110.2" rx="1.9" ry="1.3" fill="#b0801e" opacity="0.70"/>
<ellipse cx="324.4" cy="112.2" rx="4.3" ry="0.9" fill="#1e1c0c" opacity="0.68"/>
<ellipse cx="321.7" cy="110.5" rx="2.1" ry="1.8" fill="#2a200c" opacity="0.61"/>
<ellipse cx="333.3" cy="111.0" rx="3.6" ry="1.4" fill="#6c4e12" opacity="0.85"/>
<ellipse cx="316.1" cy="112.2" rx="4.1" ry="1.0" fill="#1e1c0c" opacity="0.56"/>
<ellipse cx="307.2" cy="108.4" rx="2.0" ry="1.8" fill="#b88a22" opacity="0.80"/>
<ellipse cx="321.1" cy="104.8" rx="3.2" ry="1.0" fill="#866418" opacity="0.67"/>
<ellipse cx="306.6" cy="110.9" rx="4.9" ry="2.2" fill="#2a200c" opacity="0.93"/>
<ellipse cx="317.0" cy="102.8" rx="2.6" ry="1.5" fill="#b88a22" opacity="0.60"/>
<ellipse cx="324.5" cy="101.4" rx="2.2" ry="2.1" fill="#4e3a10" opacity="0.62"/>
<ellipse cx="310.0" cy="108.4" rx="3.7" ry="1.5" fill="#986c18" opacity="0.86"/>
<ellipse cx="321.8" cy="99.8" rx="4.2" ry="1.9" fill="#4e3a10" opacity="0.77"/>
<ellipse cx="313.7" cy="100.0" rx="2.6" ry="2.2" fill="#c49a2a" opacity="0.93"/>
<ellipse cx="316.8" cy="111.6" rx="4.9" ry="1.5" fill="#c49a2a" opacity="0.68"/>
<ellipse cx="318.9" cy="113.3" rx="3.5" ry="1.7" fill="#4e3a10" opacity="0.69"/>
<ellipse cx="312.6" cy="101.2" rx="4.8" ry="1.3" fill="#b88a22" opacity="0.90"/>
<ellipse cx="314.8" cy="98.9" rx="5.3" ry="1.5" fill="#34280e" opacity="0.94"/>
<ellipse cx="322.7" cy="113.7" rx="4.9" ry="1.2" fill="#986c18" opacity="0.84"/>
<ellipse cx="319.3" cy="103.9" rx="4.6" ry="1.6" fill="#1e1c0c" opacity="0.92"/>
<ellipse cx="316.6" cy="115.0" rx="5.0" ry="1.2" fill="#a87c1c" opacity="0.63"/>
<ellipse cx="310.5" cy="103.9" rx="2.2" ry="1.9" fill="#b88a22" opacity="0.80"/>
<ellipse cx="300" cy="121" rx="30.6" ry="21.2" fill="#5a4212" opacity="0.8" filter="url(#blur1)"/>
<ellipse cx="333.7" cy="114.4" rx="1.7" ry="0.9" fill="#b88a22" opacity="0.84"/>
<ellipse cx="290.3" cy="108.9" rx="3.9" ry="1.6" fill="#b0801e" opacity="0.82"/>
<ellipse cx="328.8" cy="121.0" rx="4.7" ry="2.0" fill="#34280e" opacity="0.93"/>
<ellipse cx="276.9" cy="116.4" rx="2.6" ry="0.9" fill="#a87c1c" opacity="0.70"/>
<ellipse cx="331.2" cy="111.1" rx="3.2" ry="2.0" fill="#b88a22" opacity="0.77"/>
<ellipse cx="300.5" cy="124.8" rx="2.8" ry="1.0" fill="#34280e" opacity="0.69"/>
<ellipse cx="273.2" cy="119.4" rx="5.5" ry="1.4" fill="#866418" opacity="0.84"/>
<ellipse cx="326.2" cy="108.9" rx="4.7" ry="1.3" fill="#2a200c" opacity="0.61"/>
<ellipse cx="300.8" cy="99.9" rx="3.3" ry="1.5" fill="#2a200c" opacity="0.66"/>
<ellipse cx="274.2" cy="121.2" rx="4.7" ry="1.7" fill="#2a200c" opacity="0.91"/>
<ellipse cx="273.7" cy="125.6" rx="5.2" ry="1.8" fill="#2a200c" opacity="0.81"/>
<ellipse cx="330.3" cy="112.8" rx="4.8" ry="2.0" fill="#b0801e" opacity="0.66"/>
<ellipse cx="317.0" cy="113.6" rx="5.3" ry="1.8" fill="#34280e" opacity="0.77"/>
<ellipse cx="271.8" cy="120.1" rx="3.1" ry="1.8" fill="#2a200c" opacity="0.75"/>
<ellipse cx="326.0" cy="113.1" rx="1.8" ry="1.9" fill="#a87c1c" opacity="0.91"/>
<ellipse cx="311.2" cy="141.1" rx="1.7" ry="1.7" fill="#c49a2a" opacity="0.79"/>
<ellipse cx="285.8" cy="99.2" rx="4.5" ry="1.0" fill="#c49a2a" opacity="0.65"/>
<ellipse cx="308.3" cy="143.7" rx="3.2" ry="1.8" fill="#a87c1c" opacity="0.57"/>
<ellipse cx="288.5" cy="130.6" rx="1.6" ry="1.0" fill="#986c18" opacity="0.56"/>
<ellipse cx="299.3" cy="117.4" rx="2.5" ry="1.9" fill="#b88a22" opacity="0.84"/>
<ellipse cx="298.4" cy="120.8" rx="3.9" ry="1.9" fill="#6c4e12" opacity="0.61"/>
<ellipse cx="320.6" cy="124.3" rx="4.0" ry="1.8" fill="#986c18" opacity="0.66"/>
<ellipse cx="280.1" cy="122.0" rx="3.7" ry="1.6" fill="#a87c1c" opacity="0.91"/>
<ellipse cx="301.2" cy="97.8" rx="4.3" ry="1.5" fill="#6c4e12" opacity="0.59"/>
<ellipse cx="287.4" cy="99.9" rx="1.6" ry="1.9" fill="#b88a22" opacity="0.76"/>
<ellipse cx="304.9" cy="103.9" rx="2.8" ry="2.0" fill="#4e3a10" opacity="0.65"/>
<ellipse cx="281.7" cy="111.0" rx="1.6" ry="1.6" fill="#b88a22" opacity="0.82"/>
<ellipse cx="299.8" cy="130.1" rx="2.2" ry="1.4" fill="#6c4e12" opacity="0.75"/>
<ellipse cx="334.6" cy="118.5" rx="5.5" ry="1.1" fill="#2a200c" opacity="0.58"/>
<ellipse cx="315.0" cy="126.8" rx="4.7" ry="1.7" fill="#4e3a10" opacity="0.65"/>
<ellipse cx="276.9" cy="129.4" rx="1.5" ry="0.8" fill="#866418" opacity="0.61"/>
<ellipse cx="289.4" cy="120.4" rx="1.9" ry="0.8" fill="#6c4e12" opacity="0.59"/>
<ellipse cx="329.1" cy="124.1" rx="3.3" ry="1.5" fill="#866418" opacity="0.63"/>
<ellipse cx="329.4" cy="107.4" rx="4.4" ry="1.4" fill="#34280e" opacity="0.56"/>
<ellipse cx="271.6" cy="108.3" rx="5.2" ry="1.6" fill="#986c18" opacity="0.82"/>
<ellipse cx="295.0" cy="121.4" rx="5.3" ry="1.0" fill="#4e3a10" opacity="0.67"/>
<ellipse cx="321.8" cy="119.4" rx="1.6" ry="1.8" fill="#986c18" opacity="0.59"/>
<ellipse cx="310.1" cy="141.9" rx="4.8" ry="1.9" fill="#a87c1c" opacity="0.71"/>
<ellipse cx="283.6" cy="122.0" rx="3.9" ry="0.9" fill="#c49a2a" opacity="0.56"/>
<ellipse cx="289.5" cy="141.0" rx="2.4" ry="1.5" fill="#986c18" opacity="0.78"/>
<ellipse cx="280.9" cy="131.7" rx="4.5" ry="1.4" fill="#986c18" opacity="0.65"/>
<ellipse cx="320.2" cy="134.7" rx="2.8" ry="1.3" fill="#6c4e12" opacity="0.83"/>
<ellipse cx="328.9" cy="124.1" rx="4.6" ry="1.8" fill="#2a200c" opacity="0.67"/>
<ellipse cx="313.1" cy="118.6" rx="3.0" ry="1.5" fill="#2a200c" opacity="0.84"/>
<ellipse cx="296.8" cy="105.0" rx="3.5" ry="1.8" fill="#866418" opacity="0.64"/>
<ellipse cx="281.7" cy="121.9" rx="3.2" ry="1.8" fill="#986c18" opacity="0.78"/>
<ellipse cx="304.6" cy="113.9" rx="2.9" ry="2.2" fill="#b88a22" opacity="0.87"/>
<ellipse cx="325.8" cy="107.7" rx="5.1" ry="1.8" fill="#1e1c0c" opacity="0.57"/>
<ellipse cx="322.2" cy="118.5" rx="4.3" ry="2.0" fill="#4e3a10" opacity="0.73"/>
<ellipse cx="288.1" cy="119.7" rx="3.7" ry="2.1" fill="#866418" opacity="0.59"/>
<ellipse cx="269.7" cy="118.8" rx="2.5" ry="2.1" fill="#2a200c" opacity="0.93"/>
<ellipse cx="303.3" cy="144.3" rx="2.9" ry="1.9" fill="#b88a22" opacity="0.74"/>
<ellipse cx="293.7" cy="98.9" rx="3.0" ry="1.8" fill="#866418" opacity="0.75"/>
<ellipse cx="277.2" cy="122.7" rx="4.3" ry="2.1" fill="#1e1c0c" opacity="0.74"/>
<ellipse cx="320.1" cy="117.6" rx="4.5" ry="1.7" fill="#6c4e12" opacity="0.76"/>
<ellipse cx="312.4" cy="141.9" rx="3.0" ry="2.0" fill="#a87c1c" opacity="0.68"/>
<ellipse cx="266.1" cy="117.5" rx="3.4" ry="1.0" fill="#986c18" opacity="0.56"/>
<ellipse cx="328.8" cy="113.5" rx="3.9" ry="2.1" fill="#986c18" opacity="0.71"/>
<ellipse cx="269.9" cy="113.1" rx="2.6" ry="2.1" fill="#b0801e" opacity="0.63"/>
<ellipse cx="304.5" cy="112.3" rx="3.9" ry="1.4" fill="#c49a2a" opacity="0.76"/>
<ellipse cx="314.0" cy="139.7" rx="5.4" ry="1.9" fill="#4e3a10" opacity="0.55"/>
<ellipse cx="267.2" cy="123.1" rx="4.1" ry="1.9" fill="#2a200c" opacity="0.92"/>
<ellipse cx="321.5" cy="113.0" rx="5.0" ry="1.4" fill="#986c18" opacity="0.80"/>
<ellipse cx="281.9" cy="138.8" rx="5.3" ry="2.2" fill="#c49a2a" opacity="0.82"/>
<ellipse cx="307.8" cy="98.4" rx="2.0" ry="1.0" fill="#866418" opacity="0.95"/>
<ellipse cx="293.6" cy="112.2" rx="2.6" ry="1.5" fill="#a87c1c" opacity="0.70"/>
<ellipse cx="278.4" cy="117.3" rx="3.3" ry="2.0" fill="#c49a2a" opacity="0.75"/>
<ellipse cx="320.0" cy="136.4" rx="4.3" ry="1.2" fill="#c49a2a" opacity="0.88"/>
<ellipse cx="290.3" cy="139.9" rx="4.7" ry="1.7" fill="#866418" opacity="0.76"/>
<ellipse cx="322.5" cy="112.5" rx="2.3" ry="1.6" fill="#b88a22" opacity="0.87"/>
<ellipse cx="286.2" cy="111.0" rx="2.4" ry="1.4" fill="#6c4e12" opacity="0.76"/>
<ellipse cx="311.2" cy="124.1" rx="4.2" ry="1.9" fill="#4e3a10" opacity="0.64"/>
<ellipse cx="287.1" cy="132.4" rx="3.0" ry="1.5" fill="#c49a2a" opacity="0.73"/>
<ellipse cx="320.3" cy="136.8" rx="5.5" ry="1.1" fill="#c49a2a" opacity="0.68"/>
<ellipse cx="314.2" cy="128.1" rx="2.3" ry="1.7" fill="#4e3a10" opacity="0.62"/>
<ellipse cx="308.4" cy="128.1" rx="2.6" ry="1.6" fill="#866418" opacity="0.71"/>
<ellipse cx="309.4" cy="107.9" rx="5.0" ry="2.1" fill="#34280e" opacity="0.78"/>
<ellipse cx="297.7" cy="106.9" rx="3.1" ry="1.8" fill="#1e1c0c" opacity="0.85"/>
<ellipse cx="319.3" cy="119.2" rx="4.0" ry="1.7" fill="#4e3a10" opacity="0.67"/>
<ellipse cx="281.8" cy="122.3" rx="5.1" ry="1.4" fill="#986c18" opacity="0.91"/>
<ellipse cx="313.7" cy="143.6" rx="2.0" ry="0.8" fill="#4e3a10" opacity="0.62"/>
<ellipse cx="329.9" cy="131.9" rx="4.4" ry="1.7" fill="#a87c1c" opacity="0.77"/>
<ellipse cx="302.7" cy="143.7" rx="3.1" ry="1.2" fill="#1e1c0c" opacity="0.91"/>
<ellipse cx="289.7" cy="129.7" rx="3.5" ry="2.2" fill="#6c4e12" opacity="0.68"/>
<ellipse cx="313.6" cy="132.6" rx="1.9" ry="1.1" fill="#6c4e12" opacity="0.84"/>
<ellipse cx="333.4" cy="128.0" rx="4.1" ry="1.7" fill="#b88a22" opacity="0.62"/>
<ellipse cx="322.1" cy="127.4" rx="2.6" ry="1.2" fill="#b0801e" opacity="0.89"/>
<ellipse cx="283.4" cy="139.6" rx="3.9" ry="1.4" fill="#a87c1c" opacity="0.71"/>
<ellipse cx="272.0" cy="124.2" rx="2.8" ry="2.0" fill="#b0801e" opacity="0.59"/>
<ellipse cx="270.7" cy="119.7" rx="3.5" ry="1.4" fill="#2a200c" opacity="0.62"/>
<ellipse cx="281.7" cy="132.0" rx="5.0" ry="1.4" fill="#b0801e" opacity="0.60"/>
<ellipse cx="327.4" cy="113.1" rx="5.2" ry="0.9" fill="#c49a2a" opacity="0.73"/>
<ellipse cx="295.2" cy="108.9" rx="4.2" ry="1.1" fill="#a87c1c" opacity="0.61"/>
<ellipse cx="294.7" cy="114.4" rx="5.4" ry="1.7" fill="#a87c1c" opacity="0.89"/>
<ellipse cx="291.0" cy="122.0" rx="2.1" ry="0.8" fill="#34280e" opacity="0.77"/>
<ellipse cx="325.4" cy="126.5" rx="1.5" ry="1.9" fill="#4e3a10" opacity="0.82"/>
<ellipse cx="309.6" cy="114.4" rx="3.5" ry="1.0" fill="#986c18" opacity="0.65"/>
<ellipse cx="268.6" cy="125.7" rx="4.0" ry="1.7" fill="#4e3a10" opacity="0.80"/>
<ellipse cx="321.6" cy="102.6" rx="4.4" ry="1.5" fill="#1e1c0c" opacity="0.62"/>
<ellipse cx="325.7" cy="134.9" rx="4.0" ry="1.1" fill="#866418" opacity="0.63"/>
<ellipse cx="292.6" cy="129.0" rx="2.0" ry="1.2" fill="#c49a2a" opacity="0.87"/>
<ellipse cx="277.1" cy="114.4" rx="2.6" ry="1.9" fill="#c49a2a" opacity="0.64"/>
<ellipse cx="291.3" cy="101.0" rx="4.1" ry="0.8" fill="#34280e" opacity="0.85"/>
<ellipse cx="305.3" cy="136.2" rx="1.7" ry="1.0" fill="#a87c1c" opacity="0.85"/>
<ellipse cx="292.7" cy="104.5" rx="1.7" ry="1.9" fill="#6c4e12" opacity="0.88"/>
<ellipse cx="294.3" cy="118.2" rx="2.3" ry="1.0" fill="#1e1c0c" opacity="0.83"/>
<ellipse cx="327.3" cy="110.1" rx="1.9" ry="1.8" fill="#2a200c" opacity="0.80"/>
<ellipse cx="313.9" cy="118.7" rx="2.8" ry="1.9" fill="#34280e" opacity="0.78"/>
<ellipse cx="280.2" cy="129.4" rx="4.4" ry="1.4" fill="#1e1c0c" opacity="0.89"/>
<ellipse cx="279.8" cy="104.8" rx="5.3" ry="0.8" fill="#866418" opacity="0.68"/>
<ellipse cx="278.1" cy="117.3" rx="3.6" ry="2.1" fill="#6c4e12" opacity="0.72"/>
<ellipse cx="310.3" cy="128.5" rx="5.0" ry="2.0" fill="#4e3a10" opacity="0.70"/>
<ellipse cx="278.6" cy="108.2" rx="3.8" ry="1.4" fill="#2a200c" opacity="0.89"/>
<ellipse cx="295.0" cy="126.7" rx="3.0" ry="1.7" fill="#2a200c" opacity="0.64"/>
<ellipse cx="278.2" cy="107.5" rx="5.0" ry="1.8" fill="#c49a2a" opacity="0.90"/>
<ellipse cx="268.1" cy="116.0" rx="1.9" ry="1.9" fill="#a87c1c" opacity="0.63"/>
<ellipse cx="292.2" cy="134.0" rx="2.5" ry="1.8" fill="#4e3a10" opacity="0.88"/>
<ellipse cx="322.2" cy="128.5" rx="4.3" ry="1.2" fill="#b0801e" opacity="0.60"/>
<ellipse cx="316.4" cy="136.8" rx="3.0" ry="0.9" fill="#b0801e" opacity="0.73"/>
<ellipse cx="298.1" cy="128.1" rx="3.4" ry="1.9" fill="#6c4e12" opacity="0.61"/>
<ellipse cx="289.2" cy="144.4" rx="5.2" ry="1.1" fill="#4e3a10" opacity="0.79"/>
<ellipse cx="292.3" cy="103.7" rx="2.4" ry="1.1" fill="#a87c1c" opacity="0.65"/>
<ellipse cx="300.1" cy="145.3" rx="4.4" ry="2.0" fill="#986c18" opacity="0.94"/>
<ellipse cx="280.7" cy="131.8" rx="3.0" ry="1.1" fill="#6c4e12" opacity="0.57"/>
<ellipse cx="266.5" cy="117.3" rx="3.9" ry="1.6" fill="#a87c1c" opacity="0.57"/>
<ellipse cx="293.9" cy="105.7" rx="3.6" ry="0.9" fill="#34280e" opacity="0.69"/>
<ellipse cx="323.6" cy="114.7" rx="1.8" ry="1.4" fill="#6c4e12" opacity="0.66"/>
<ellipse cx="307.2" cy="121.9" rx="4.1" ry="1.1" fill="#6c4e12" opacity="0.77"/>
<ellipse cx="278.4" cy="107.6" rx="5.3" ry="0.9" fill="#34280e" opacity="0.77"/>
<ellipse cx="294.2" cy="112.7" rx="4.3" ry="0.8" fill="#34280e" opacity="0.81"/>
<ellipse cx="265.5" cy="125.1" rx="2.9" ry="1.3" fill="#986c18" opacity="0.79"/>
<ellipse cx="324.9" cy="134.8" rx="3.0" ry="2.1" fill="#1e1c0c" opacity="0.66"/>
<ellipse cx="281.0" cy="122.8" rx="3.9" ry="1.0" fill="#a87c1c" opacity="0.69"/>
<ellipse cx="301.7" cy="119.1" rx="4.2" ry="2.2" fill="#a87c1c" opacity="0.89"/>
<ellipse cx="323.4" cy="129.5" rx="3.9" ry="1.4" fill="#866418" opacity="0.65"/>
<ellipse cx="311.7" cy="138.8" rx="1.6" ry="1.9" fill="#4e3a10" opacity="0.82"/>
<ellipse cx="290.5" cy="143.8" rx="1.7" ry="1.1" fill="#6c4e12" opacity="0.71"/>
<ellipse cx="310.1" cy="116.5" rx="3.9" ry="0.9" fill="#6c4e12" opacity="0.77"/>
<ellipse cx="323.9" cy="133.5" rx="1.8" ry="2.0" fill="#b0801e" opacity="0.81"/>
<ellipse cx="324.5" cy="126.8" rx="3.6" ry="1.4" fill="#b88a22" opacity="0.61"/>
<ellipse cx="321.2" cy="136.6" rx="1.7" ry="2.1" fill="#b88a22" opacity="0.76"/>
<ellipse cx="277.9" cy="127.1" rx="5.3" ry="1.9" fill="#1e1c0c" opacity="0.73"/>
<ellipse cx="264.2" cy="121.7" rx="4.9" ry="1.0" fill="#c49a2a" opacity="0.83"/>
<ellipse cx="328.5" cy="118.2" rx="3.8" ry="1.2" fill="#2a200c" opacity="0.74"/>
<ellipse cx="309.0" cy="136.3" rx="4.6" ry="1.3" fill="#1e1c0c" opacity="0.93"/>
<ellipse cx="312.3" cy="103.2" rx="1.6" ry="1.2" fill="#a87c1c" opacity="0.94"/>
<ellipse cx="274.1" cy="115.4" rx="4.2" ry="1.1" fill="#2a200c" opacity="0.70"/>
<ellipse cx="314.0" cy="107.1" rx="4.2" ry="1.6" fill="#34280e" opacity="0.61"/>
<ellipse cx="291.7" cy="144.5" rx="2.9" ry="1.0" fill="#1e1c0c" opacity="0.91"/>
<ellipse cx="299.5" cy="100.8" rx="5.3" ry="1.0" fill="#b0801e" opacity="0.73"/>
<ellipse cx="289.3" cy="120.0" rx="4.5" ry="2.0" fill="#2a200c" opacity="0.80"/>
<ellipse cx="303.0" cy="100.2" rx="3.0" ry="1.9" fill="#4e3a10" opacity="0.62"/>
<ellipse cx="303.5" cy="144.5" rx="2.2" ry="1.4" fill="#b88a22" opacity="0.71"/>
<ellipse cx="323.1" cy="111.1" rx="3.1" ry="1.7" fill="#c49a2a" opacity="0.82"/>
<ellipse cx="288.7" cy="107.3" rx="1.7" ry="1.4" fill="#986c18" opacity="0.55"/>
<ellipse cx="310.6" cy="108.9" rx="2.8" ry="1.4" fill="#4e3a10" opacity="0.86"/>
<ellipse cx="275.4" cy="118.1" rx="4.0" ry="1.1" fill="#986c18" opacity="0.79"/>
<ellipse cx="288.9" cy="132.4" rx="2.1" ry="1.8" fill="#a87c1c" opacity="0.68"/>
<ellipse cx="266.2" cy="124.2" rx="5.4" ry="2.0" fill="#1e1c0c" opacity="0.91"/>
<ellipse cx="308.9" cy="141.6" rx="2.8" ry="1.3" fill="#866418" opacity="0.78"/>
<ellipse cx="296.3" cy="104.1" rx="2.6" ry="1.5" fill="#b0801e" opacity="0.70"/>
<ellipse cx="285.8" cy="132.6" rx="4.7" ry="2.1" fill="#34280e" opacity="0.87"/>
<ellipse cx="297.0" cy="109.3" rx="3.8" ry="1.1" fill="#c49a2a" opacity="0.78"/>
<ellipse cx="285.6" cy="120.3" rx="3.1" ry="1.5" fill="#4e3a10" opacity="0.81"/>
<ellipse cx="286.4" cy="101.9" rx="3.9" ry="1.1" fill="#2a200c" opacity="0.80"/>
<ellipse cx="303.4" cy="112.2" rx="2.3" ry="1.8" fill="#a87c1c" opacity="0.80"/>
<ellipse cx="272.3" cy="126.4" rx="4.5" ry="1.2" fill="#b0801e" opacity="0.88"/>
<ellipse cx="333.7" cy="122.5" rx="2.7" ry="1.6" fill="#2a200c" opacity="0.70"/>
<ellipse cx="321.7" cy="128.8" rx="2.1" ry="2.0" fill="#2a200c" opacity="0.91"/>
<ellipse cx="288.2" cy="111.0" rx="5.0" ry="1.6" fill="#34280e" opacity="0.83"/>
<ellipse cx="290.9" cy="144.1" rx="3.7" ry="1.6" fill="#986c18" opacity="0.72"/>
<ellipse cx="319.4" cy="134.6" rx="3.4" ry="1.1" fill="#a87c1c" opacity="0.83"/>
<ellipse cx="291.3" cy="122.6" rx="5.4" ry="2.0" fill="#4e3a10" opacity="0.80"/>
<ellipse cx="309.7" cy="102.1" rx="4.9" ry="1.0" fill="#6c4e12" opacity="0.56"/>
<ellipse cx="308.5" cy="126.5" rx="4.6" ry="1.5" fill="#b0801e" opacity="0.60"/>
<ellipse cx="315.9" cy="132.9" rx="4.5" ry="1.2" fill="#a87c1c" opacity="0.85"/>
<ellipse cx="292.5" cy="129.1" rx="1.8" ry="1.6" fill="#a87c1c" opacity="0.60"/>
<ellipse cx="297.3" cy="96.3" rx="4.2" ry="1.5" fill="#c49a2a" opacity="0.67"/>
<ellipse cx="310.8" cy="114.8" rx="4.5" ry="0.8" fill="#986c18" opacity="0.91"/>
<ellipse cx="280.2" cy="139.4" rx="2.1" ry="1.2" fill="#b0801e" opacity="0.82"/>
<ellipse cx="311.4" cy="116.8" rx="5.5" ry="1.1" fill="#6c4e12" opacity="0.87"/>
<ellipse cx="333.6" cy="119.4" rx="4.2" ry="1.1" fill="#1e1c0c" opacity="0.81"/>
<ellipse cx="310.4" cy="108.5" rx="5.2" ry="1.7" fill="#4e3a10" opacity="0.92"/>
<ellipse cx="287.8" cy="119.6" rx="5.0" ry="1.0" fill="#866418" opacity="0.61"/>
<ellipse cx="303.1" cy="99.6" rx="4.0" ry="1.7" fill="#986c18" opacity="0.58"/>
<ellipse cx="315.4" cy="102.7" rx="2.2" ry="1.7" fill="#b0801e" opacity="0.82"/>
<ellipse cx="331.5" cy="131.7" rx="2.0" ry="1.1" fill="#1e1c0c" opacity="0.73"/>
<ellipse cx="290.2" cy="125.5" rx="2.4" ry="1.3" fill="#866418" opacity="0.56"/>
<ellipse cx="324.0" cy="136.1" rx="2.9" ry="1.1" fill="#866418" opacity="0.64"/>
<ellipse cx="322.5" cy="139.9" rx="5.2" ry="2.0" fill="#b88a22" opacity="0.71"/>
<ellipse cx="328.9" cy="120.1" rx="4.6" ry="1.4" fill="#986c18" opacity="0.72"/>
<ellipse cx="287.8" cy="99.8" rx="2.3" ry="0.8" fill="#866418" opacity="0.88"/>
<ellipse cx="308.6" cy="112.5" rx="4.9" ry="1.9" fill="#b0801e" opacity="0.64"/>
<ellipse cx="267.7" cy="118.5" rx="2.7" ry="1.4" fill="#2a200c" opacity="0.90"/>
<ellipse cx="285.2" cy="129.9" rx="3.1" ry="1.7" fill="#866418" opacity="0.67"/>
<ellipse cx="276.8" cy="112.6" rx="3.8" ry="1.3" fill="#986c18" opacity="0.78"/>
<ellipse cx="299.2" cy="137.0" rx="3.8" ry="1.8" fill="#34280e" opacity="0.77"/>
<ellipse cx="281.2" cy="119.0" rx="5.4" ry="1.3" fill="#986c18" opacity="0.84"/>
<ellipse cx="323.6" cy="119.3" rx="5.4" ry="2.0" fill="#34280e" opacity="0.71"/>
<ellipse cx="312.8" cy="99.5" rx="2.7" ry="1.4" fill="#34280e" opacity="0.59"/>
<ellipse cx="289.1" cy="128.7" rx="5.1" ry="1.6" fill="#866418" opacity="0.77"/>
<ellipse cx="321.3" cy="109.9" rx="2.7" ry="2.2" fill="#866418" opacity="0.87"/>
<ellipse cx="327.7" cy="106.3" rx="3.8" ry="2.0" fill="#34280e" opacity="0.91"/>
<ellipse cx="273.4" cy="114.8" rx="2.1" ry="1.7" fill="#866418" opacity="0.75"/>
<ellipse cx="298.3" cy="115.2" rx="3.5" ry="1.6" fill="#c49a2a" opacity="0.84"/>
<ellipse cx="306.4" cy="118.0" rx="2.8" ry="1.4" fill="#6c4e12" opacity="0.70"/>
<ellipse cx="323.7" cy="118.3" rx="4.2" ry="2.0" fill="#a87c1c" opacity="0.84"/>
<ellipse cx="329.0" cy="122.4" rx="2.2" ry="1.8" fill="#2a200c" opacity="0.60"/>
<ellipse cx="293.3" cy="108.2" rx="4.1" ry="1.0" fill="#a87c1c" opacity="0.72"/>
<ellipse cx="317.5" cy="99.6" rx="3.8" ry="0.8" fill="#4e3a10" opacity="0.64"/>
<ellipse cx="284" cy="117" rx="15.3" ry="22.9" fill="#5a4212" opacity="0.8" filter="url(#blur1)"/>
<ellipse cx="286.6" cy="143.2" rx="2.0" ry="1.8" fill="#986c18" opacity="0.60"/>
<ellipse cx="288.8" cy="99.2" rx="3.1" ry="0.8" fill="#2a200c" opacity="0.73"/>
<ellipse cx="276.1" cy="117.4" rx="4.8" ry="0.9" fill="#6c4e12" opacity="0.85"/>
<ellipse cx="280.1" cy="98.4" rx="3.4" ry="2.1" fill="#986c18" opacity="0.82"/>
<ellipse cx="297.3" cy="131.0" rx="3.0" ry="2.0" fill="#986c18" opacity="0.81"/>
<ellipse cx="276.1" cy="136.1" rx="3.5" ry="1.7" fill="#6c4e12" opacity="0.78"/>
<ellipse cx="286.9" cy="122.3" rx="5.3" ry="1.5" fill="#6c4e12" opacity="0.61"/>
<ellipse cx="291.8" cy="103.0" rx="3.8" ry="1.4" fill="#34280e" opacity="0.69"/>
<ellipse cx="288.8" cy="110.1" rx="4.6" ry="0.9" fill="#4e3a10" opacity="0.83"/>
<ellipse cx="299.7" cy="109.3" rx="3.5" ry="1.1" fill="#b88a22" opacity="0.69"/>
<ellipse cx="280.9" cy="138.4" rx="4.7" ry="2.0" fill="#34280e" opacity="0.64"/>
<ellipse cx="284.1" cy="119.9" rx="2.9" ry="1.2" fill="#866418" opacity="0.65"/>
<ellipse cx="279.5" cy="138.6" rx="3.2" ry="1.7" fill="#986c18" opacity="0.62"/>
<ellipse cx="274.8" cy="94.2" rx="2.3" ry="1.9" fill="#c49a2a" opacity="0.60"/>
<ellipse cx="287.2" cy="101.0" rx="4.8" ry="1.6" fill="#6c4e12" opacity="0.61"/>
<ellipse cx="273.4" cy="110.3" rx="1.8" ry="0.9" fill="#986c18" opacity="0.56"/>
<ellipse cx="275.8" cy="96.8" rx="3.6" ry="1.0" fill="#34280e" opacity="0.75"/>
<ellipse cx="292.3" cy="133.9" rx="2.3" ry="2.1" fill="#4e3a10" opacity="0.70"/>
<ellipse cx="270.1" cy="106.6" rx="2.9" ry="2.2" fill="#a87c1c" opacity="0.81"/>
<ellipse cx="279.6" cy="117.0" rx="4.0" ry="2.0" fill="#b0801e" opacity="0.62"/>
<ellipse cx="277.8" cy="132.1" rx="2.0" ry="1.1" fill="#6c4e12" opacity="0.75"/>
<ellipse cx="277.0" cy="118.8" rx="2.0" ry="1.6" fill="#2a200c" opacity="0.81"/>
<ellipse cx="281.5" cy="98.0" rx="1.9" ry="2.1" fill="#b0801e" opacity="0.71"/>
<ellipse cx="278.5" cy="126.8" rx="2.3" ry="1.4" fill="#986c18" opacity="0.63"/>
<ellipse cx="297.9" cy="117.6" rx="5.1" ry="1.7" fill="#866418" opacity="0.76"/>
<ellipse cx="299.4" cy="113.9" rx="3.9" ry="1.9" fill="#b0801e" opacity="0.63"/>
<ellipse cx="285.7" cy="136.4" rx="4.5" ry="1.7" fill="#a87c1c" opacity="0.67"/>
<ellipse cx="282.5" cy="124.3" rx="2.8" ry="2.1" fill="#866418" opacity="0.64"/>
<ellipse cx="280.2" cy="136.1" rx="5.4" ry="1.3" fill="#4e3a10" opacity="0.76"/>
<ellipse cx="271.6" cy="98.3" rx="4.6" ry="1.2" fill="#986c18" opacity="0.63"/>
<ellipse cx="271.9" cy="136.3" rx="4.9" ry="1.2" fill="#c49a2a" opacity="0.71"/>
<ellipse cx="271.2" cy="134.3" rx="3.6" ry="1.8" fill="#4e3a10" opacity="0.88"/>
<ellipse cx="275.4" cy="107.0" rx="3.2" ry="1.5" fill="#34280e" opacity="0.75"/>
<ellipse cx="290.3" cy="122.4" rx="3.5" ry="2.0" fill="#866418" opacity="0.86"/>
<ellipse cx="272.4" cy="99.7" rx="5.4" ry="1.2" fill="#34280e" opacity="0.66"/>
<ellipse cx="298.3" cy="116.4" rx="2.5" ry="1.1" fill="#6c4e12" opacity="0.87"/>
<ellipse cx="283.9" cy="103.5" rx="4.8" ry="1.6" fill="#6c4e12" opacity="0.70"/>
<ellipse cx="287.1" cy="93.4" rx="3.1" ry="1.7" fill="#b0801e" opacity="0.95"/>
<ellipse cx="298.0" cy="105.5" rx="2.0" ry="1.7" fill="#1e1c0c" opacity="0.66"/>
<ellipse cx="294.1" cy="127.3" rx="4.2" ry="1.2" fill="#b0801e" opacity="0.59"/>
<ellipse cx="270.9" cy="101.4" rx="4.1" ry="1.2" fill="#a87c1c" opacity="0.88"/>
<ellipse cx="289.8" cy="122.0" rx="4.7" ry="2.2" fill="#986c18" opacity="0.88"/>
<ellipse cx="281.8" cy="96.4" rx="2.8" ry="1.2" fill="#4e3a10" opacity="0.94"/>
<ellipse cx="299.6" cy="127.3" rx="5.2" ry="1.7" fill="#866418" opacity="0.61"/>
<ellipse cx="283.7" cy="133.8" rx="3.2" ry="1.9" fill="#986c18" opacity="0.76"/>
<ellipse cx="299.1" cy="129.8" rx="2.8" ry="1.1" fill="#a87c1c" opacity="0.57"/>
<ellipse cx="285.7" cy="105.9" rx="2.2" ry="1.7" fill="#c49a2a" opacity="0.90"/>
<ellipse cx="282.9" cy="98.4" rx="3.8" ry="2.1" fill="#b88a22" opacity="0.92"/>
<ellipse cx="290.9" cy="128.4" rx="3.1" ry="1.0" fill="#2a200c" opacity="0.57"/>
<ellipse cx="294.5" cy="103.6" rx="4.0" ry="1.4" fill="#866418" opacity="0.78"/>
<ellipse cx="297.8" cy="101.3" rx="4.3" ry="2.2" fill="#2a200c" opacity="0.90"/>
<ellipse cx="282.5" cy="93.3" rx="2.2" ry="1.2" fill="#2a200c" opacity="0.88"/>
<ellipse cx="289.0" cy="105.0" rx="4.0" ry="1.5" fill="#34280e" opacity="0.67"/>
<ellipse cx="286.6" cy="136.2" rx="4.6" ry="2.0" fill="#1e1c0c" opacity="0.74"/>
<ellipse cx="283.2" cy="121.7" rx="5.0" ry="1.5" fill="#c49a2a" opacity="0.69"/>
<ellipse cx="279.5" cy="96.8" rx="2.1" ry="1.8" fill="#986c18" opacity="0.88"/>
<ellipse cx="267.4" cy="125.3" rx="4.6" ry="2.0" fill="#b0801e" opacity="0.80"/>
<ellipse cx="289.8" cy="115.1" rx="5.5" ry="0.9" fill="#b0801e" opacity="0.84"/>
<ellipse cx="271.9" cy="136.7" rx="1.9" ry="1.2" fill="#986c18" opacity="0.74"/>
<ellipse cx="288.2" cy="128.5" rx="3.0" ry="1.3" fill="#4e3a10" opacity="0.85"/>
<ellipse cx="270.0" cy="127.0" rx="4.2" ry="1.8" fill="#1e1c0c" opacity="0.91"/>
<ellipse cx="282.7" cy="121.5" rx="2.4" ry="1.3" fill="#4e3a10" opacity="0.74"/>
<ellipse cx="287.1" cy="125.9" rx="2.6" ry="0.8" fill="#2a200c" opacity="0.85"/>
<ellipse cx="276.1" cy="110.1" rx="4.9" ry="1.2" fill="#2a200c" opacity="0.73"/>
<ellipse cx="275.2" cy="103.2" rx="4.1" ry="1.3" fill="#b0801e" opacity="0.94"/>
<ellipse cx="295.9" cy="131.4" rx="4.2" ry="1.3" fill="#b0801e" opacity="0.70"/>
<ellipse cx="269.5" cy="110.4" rx="2.2" ry="1.0" fill="#a87c1c" opacity="0.59"/>
<ellipse cx="288.2" cy="94.3" rx="2.4" ry="1.7" fill="#c49a2a" opacity="0.93"/>
<ellipse cx="289.4" cy="91.8" rx="1.6" ry="1.4" fill="#6c4e12" opacity="0.68"/>
<ellipse cx="285.3" cy="117.3" rx="1.6" ry="1.0" fill="#c49a2a" opacity="0.81"/>
<ellipse cx="300.2" cy="118.7" rx="2.8" ry="2.0" fill="#866418" opacity="0.64"/>
<ellipse cx="293.6" cy="96.3" rx="4.2" ry="1.5" fill="#6c4e12" opacity="0.74"/>
<ellipse cx="299.2" cy="115.0" rx="5.4" ry="2.1" fill="#866418" opacity="0.75"/>
<ellipse cx="297.0" cy="126.9" rx="4.6" ry="1.9" fill="#4e3a10" opacity="0.92"/>
<ellipse cx="280.3" cy="119.3" rx="3.1" ry="1.7" fill="#a87c1c" opacity="0.66"/>
<ellipse cx="285.2" cy="102.0" rx="2.1" ry="0.9" fill="#c49a2a" opacity="0.66"/>
<ellipse cx="270.2" cy="114.1" rx="3.1" ry="1.1" fill="#6c4e12" opacity="0.63"/>
<ellipse cx="289.1" cy="96.5" rx="5.0" ry="1.9" fill="#2a200c" opacity="0.61"/>
<ellipse cx="288.0" cy="105.2" rx="5.1" ry="1.4" fill="#34280e" opacity="0.88"/>
<ellipse cx="271.9" cy="111.2" rx="3.4" ry="1.7" fill="#4e3a10" opacity="0.80"/>
<ellipse cx="274.8" cy="104.6" rx="2.4" ry="1.9" fill="#b0801e" opacity="0.93"/>
<ellipse cx="267.6" cy="108.1" rx="3.2" ry="1.7" fill="#6c4e12" opacity="0.69"/>
<ellipse cx="295.0" cy="134.2" rx="1.8" ry="1.3" fill="#b0801e" opacity="0.61"/>
<ellipse cx="285.2" cy="137.7" rx="4.9" ry="2.1" fill="#866418" opacity="0.69"/>
<ellipse cx="281.7" cy="125.6" rx="4.2" ry="2.1" fill="#2a200c" opacity="0.71"/>
<ellipse cx="294.4" cy="118.0" rx="4.4" ry="2.0" fill="#6c4e12" opacity="0.56"/>
<ellipse cx="299.0" cy="119.2" rx="4.3" ry="1.2" fill="#2a200c" opacity="0.90"/>
<ellipse cx="290.0" cy="123.8" rx="1.7" ry="1.4" fill="#986c18" opacity="0.77"/>
<ellipse cx="288.6" cy="137.3" rx="1.8" ry="1.3" fill="#866418" opacity="0.83"/>
<ellipse cx="296.5" cy="107.4" rx="5.4" ry="1.8" fill="#c49a2a" opacity="0.80"/>
<ellipse cx="301.2" cy="112.1" rx="3.4" ry="1.5" fill="#6c4e12" opacity="0.90"/>
<ellipse cx="269.8" cy="111.4" rx="4.3" ry="1.5" fill="#34280e" opacity="0.81"/>
<ellipse cx="296.1" cy="109.8" rx="5.0" ry="1.7" fill="#986c18" opacity="0.78"/>
<ellipse cx="271.8" cy="101.0" rx="2.2" ry="1.3" fill="#c49a2a" opacity="0.78"/>
<ellipse cx="297.6" cy="110.7" rx="3.3" ry="1.1" fill="#b88a22" opacity="0.85"/>
<ellipse cx="297.4" cy="99.4" rx="2.9" ry="0.9" fill="#866418" opacity="0.79"/>
<ellipse cx="281.3" cy="142.4" rx="3.7" ry="1.8" fill="#2a200c" opacity="0.73"/>
<ellipse cx="281.6" cy="105.8" rx="3.7" ry="1.7" fill="#1e1c0c" opacity="0.89"/>
<ellipse cx="294.3" cy="124.1" rx="3.7" ry="1.1" fill="#2a200c" opacity="0.68"/>
<ellipse cx="284.6" cy="128.8" rx="2.5" ry="1.3" fill="#34280e" opacity="0.69"/>
<ellipse cx="333" cy="122" rx="13.6" ry="11.9" fill="#5a4212" opacity="0.8" filter="url(#blur1)"/>
<ellipse cx="336.9" cy="109.8" rx="3.4" ry="1.2" fill="#a87c1c" opacity="0.61"/>
<ellipse cx="319.5" cy="114.9" rx="4.4" ry="1.2" fill="#a87c1c" opacity="0.66"/>
<ellipse cx="337.4" cy="110.7" rx="3.2" ry="1.6" fill="#1e1c0c" opacity="0.59"/>
<ellipse cx="320.7" cy="117.5" rx="4.4" ry="1.7" fill="#b0801e" opacity="0.82"/>
<ellipse cx="338.2" cy="115.3" rx="1.9" ry="1.9" fill="#c49a2a" opacity="0.73"/>
<ellipse cx="338.9" cy="125.5" rx="4.0" ry="1.2" fill="#a87c1c" opacity="0.79"/>
<ellipse cx="336.9" cy="132.8" rx="2.9" ry="2.1" fill="#6c4e12" opacity="0.76"/>
<ellipse cx="324.8" cy="112.8" rx="4.7" ry="2.2" fill="#a87c1c" opacity="0.80"/>
<ellipse cx="333.3" cy="131.2" rx="2.9" ry="1.0" fill="#34280e" opacity="0.90"/>
<ellipse cx="327.6" cy="121.2" rx="4.2" ry="1.2" fill="#6c4e12" opacity="0.70"/>
<ellipse cx="335.1" cy="132.7" rx="4.8" ry="2.0" fill="#34280e" opacity="0.56"/>
<ellipse cx="333.4" cy="120.2" rx="2.8" ry="2.1" fill="#b0801e" opacity="0.80"/>
<ellipse cx="324.8" cy="129.2" rx="2.7" ry="1.8" fill="#2a200c" opacity="0.57"/>
<ellipse cx="320.8" cy="127.6" rx="3.1" ry="2.2" fill="#6c4e12" opacity="0.87"/>
<ellipse cx="343.5" cy="127.8" rx="5.0" ry="1.4" fill="#866418" opacity="0.87"/>
<ellipse cx="322.1" cy="121.0" rx="4.3" ry="1.4" fill="#986c18" opacity="0.63"/>
<ellipse cx="328.4" cy="113.5" rx="4.4" ry="2.2" fill="#a87c1c" opacity="0.56"/>
<ellipse cx="341.8" cy="129.5" rx="2.9" ry="1.2" fill="#2a200c" opacity="0.68"/>
<ellipse cx="317.2" cy="120.5" rx="5.2" ry="1.4" fill="#2a200c" opacity="0.66"/>
<ellipse cx="322.1" cy="123.5" rx="2.1" ry="1.3" fill="#c49a2a" opacity="0.80"/>
<ellipse cx="323.5" cy="123.7" rx="2.2" ry="2.1" fill="#b0801e" opacity="0.70"/>
<ellipse cx="325.8" cy="117.2" rx="3.1" ry="1.5" fill="#b88a22" opacity="0.92"/>
<ellipse cx="332.7" cy="123.1" rx="3.3" ry="0.9" fill="#a87c1c" opacity="0.79"/>
<ellipse cx="321.0" cy="117.1" rx="3.0" ry="2.2" fill="#2a200c" opacity="0.89"/>
<ellipse cx="339.5" cy="124.3" rx="5.3" ry="1.7" fill="#866418" opacity="0.87"/>
<ellipse cx="336.6" cy="112.4" rx="1.8" ry="1.1" fill="#4e3a10" opacity="0.69"/>
<ellipse cx="340.8" cy="130.7" rx="3.9" ry="1.0" fill="#1e1c0c" opacity="0.82"/>
<ellipse cx="332.2" cy="119.1" rx="3.4" ry="1.8" fill="#986c18" opacity="0.80"/>
<ellipse cx="331.3" cy="117.2" rx="4.8" ry="0.9" fill="#b0801e" opacity="0.80"/>
<ellipse cx="331.6" cy="134.8" rx="4.1" ry="1.5" fill="#a87c1c" opacity="0.87"/>
<ellipse cx="343.1" cy="132.3" rx="5.1" ry="1.4" fill="#2a200c" opacity="0.73"/>
<ellipse cx="330.8" cy="133.7" rx="1.8" ry="1.9" fill="#4e3a10" opacity="0.66"/>
<ellipse cx="337.3" cy="120.5" rx="4.9" ry="1.2" fill="#2a200c" opacity="0.72"/>
<ellipse cx="335.5" cy="120.8" rx="1.8" ry="1.9" fill="#1e1c0c" opacity="0.65"/>
<ellipse cx="332.6" cy="110.0" rx="2.8" ry="0.8" fill="#6c4e12" opacity="0.83"/>
<ellipse cx="330.5" cy="125.2" rx="4.4" ry="1.0" fill="#34280e" opacity="0.60"/>
<ellipse cx="332.4" cy="110.8" rx="2.0" ry="1.3" fill="#a87c1c" opacity="0.62"/>
<ellipse cx="331.2" cy="116.2" rx="4.5" ry="1.5" fill="#866418" opacity="0.87"/>
<ellipse cx="345.6" cy="118.1" rx="4.4" ry="1.0" fill="#b88a22" opacity="0.85"/>
<ellipse cx="345.0" cy="121.6" rx="1.5" ry="1.9" fill="#866418" opacity="0.63"/>
<ellipse cx="328.5" cy="129.7" rx="3.3" ry="1.4" fill="#34280e" opacity="0.77"/>
<ellipse cx="325.9" cy="111.9" rx="4.1" ry="1.9" fill="#4e3a10" opacity="0.66"/>
<ellipse cx="335.5" cy="127.0" rx="4.3" ry="1.0" fill="#986c18" opacity="0.57"/>
<ellipse cx="346.5" cy="125.0" rx="2.0" ry="1.8" fill="#986c18" opacity="0.82"/>
<ellipse cx="329.8" cy="120.1" rx="2.4" ry="1.4" fill="#b0801e" opacity="0.83"/>
<ellipse cx="337.6" cy="120.7" rx="1.8" ry="1.6" fill="#a87c1c" opacity="0.62"/>
<ellipse cx="330.1" cy="117.9" rx="1.9" ry="2.2" fill="#a87c1c" opacity="0.82"/>
<ellipse cx="347.4" cy="124.4" rx="5.5" ry="1.4" fill="#c49a2a" opacity="0.65"/>
<ellipse cx="334.6" cy="134.6" rx="4.1" ry="1.5" fill="#1e1c0c" opacity="0.64"/>
<ellipse cx="326.2" cy="118.1" rx="4.7" ry="1.8" fill="#1e1c0c" opacity="0.68"/>
<ellipse cx="338" cy="186" rx="12.8" ry="6.0" fill="#5a4212" opacity="0.8" filter="url(#blur1)"/>
<ellipse cx="338.8" cy="191.1" rx="3.0" ry="1.6" fill="#1e1c0c" opacity="0.78"/>
<ellipse cx="326.7" cy="181.9" rx="3.4" ry="1.6" fill="#6c4e12" opacity="0.95"/>
<ellipse cx="324.5" cy="187.2" rx="3.4" ry="1.7" fill="#b88a22" opacity="0.64"/>
<ellipse cx="346.4" cy="191.5" rx="3.1" ry="0.8" fill="#986c18" opacity="0.61"/>
<ellipse cx="341.0" cy="185.6" rx="4.6" ry="2.0" fill="#c49a2a" opacity="0.74"/>
<ellipse cx="335.3" cy="179.6" rx="4.4" ry="2.1" fill="#866418" opacity="0.84"/>
<ellipse cx="325.0" cy="182.8" rx="2.0" ry="1.3" fill="#a87c1c" opacity="0.60"/>
<ellipse cx="341.0" cy="192.7" rx="3.2" ry="1.7" fill="#c49a2a" opacity="0.72"/>
<ellipse cx="343.7" cy="181.4" rx="3.6" ry="1.4" fill="#6c4e12" opacity="0.91"/>
<ellipse cx="332.0" cy="179.9" rx="4.9" ry="2.2" fill="#1e1c0c" opacity="0.83"/>
<ellipse cx="335.3" cy="182.2" rx="3.7" ry="1.6" fill="#986c18" opacity="0.84"/>
<ellipse cx="341.3" cy="192.2" rx="3.8" ry="1.2" fill="#986c18" opacity="0.74"/>
<ellipse cx="331.3" cy="182.3" rx="2.9" ry="0.9" fill="#b88a22" opacity="0.56"/>
<ellipse cx="329.3" cy="188.0" rx="2.0" ry="1.6" fill="#a87c1c" opacity="0.70"/>
<ellipse cx="328.5" cy="183.3" rx="5.2" ry="1.2" fill="#6c4e12" opacity="0.95"/>
<ellipse cx="336.5" cy="187.8" rx="3.9" ry="0.8" fill="#6c4e12" opacity="0.94"/>
<ellipse cx="336.0" cy="189.5" rx="4.3" ry="2.2" fill="#4e3a10" opacity="0.68"/>
<ellipse cx="351.7" cy="184.3" rx="3.0" ry="1.4" fill="#34280e" opacity="0.70"/>
<ellipse cx="346.3" cy="181.7" rx="1.9" ry="2.2" fill="#34280e" opacity="0.66"/>
<ellipse cx="329.6" cy="181.6" rx="5.2" ry="1.4" fill="#c49a2a" opacity="0.76"/>
<ellipse cx="336.5" cy="185.8" rx="3.2" ry="1.6" fill="#a87c1c" opacity="0.70"/>
<ellipse cx="333.4" cy="184.6" rx="4.0" ry="1.3" fill="#4e3a10" opacity="0.82"/>
<ellipse cx="330.4" cy="190.7" rx="4.5" ry="0.8" fill="#a87c1c" opacity="0.93"/>
<ellipse cx="347.0" cy="186.6" rx="4.0" ry="1.2" fill="#b0801e" opacity="0.68"/>
<ellipse cx="332.5" cy="189.0" rx="3.0" ry="1.6" fill="#c49a2a" opacity="0.86"/>
<ellipse cx="348.7" cy="189.9" rx="5.4" ry="1.8" fill="#b88a22" opacity="0.67"/>
<ellipse cx="340.3" cy="192.2" rx="2.5" ry="1.1" fill="#866418" opacity="0.81"/>
<ellipse cx="347.5" cy="189.1" rx="5.3" ry="1.7" fill="#6c4e12" opacity="0.73"/>
<ellipse cx="341.8" cy="183.7" rx="2.8" ry="1.7" fill="#b0801e" opacity="0.73"/>
<ellipse cx="338.8" cy="188.4" rx="3.6" ry="1.1" fill="#b0801e" opacity="0.62"/>
<ellipse cx="335.6" cy="192.2" rx="4.1" ry="1.9" fill="#4e3a10" opacity="0.79"/>
<ellipse cx="328.5" cy="188.4" rx="4.9" ry="1.5" fill="#1e1c0c" opacity="0.72"/>
<ellipse cx="329.6" cy="188.2" rx="5.2" ry="1.0" fill="#a87c1c" opacity="0.74"/>
<ellipse cx="343.9" cy="181.2" rx="3.5" ry="1.6" fill="#6c4e12" opacity="0.56"/>
<ellipse cx="325.5" cy="187.6" rx="4.5" ry="2.1" fill="#34280e" opacity="0.69"/>
<ellipse cx="350" cy="118" rx="5.1" ry="8.5" fill="#5a4212" opacity="0.8" filter="url(#blur1)"/>
<ellipse cx="350.2" cy="121.2" rx="3.1" ry="1.0" fill="#986c18" opacity="0.56"/>
<ellipse cx="346.9" cy="116.4" rx="5.5" ry="0.9" fill="#34280e" opacity="0.76"/>
<ellipse cx="349.6" cy="122.1" rx="1.9" ry="1.1" fill="#a87c1c" opacity="0.88"/>
<ellipse cx="351.9" cy="109.6" rx="2.3" ry="1.2" fill="#1e1c0c" opacity="0.90"/>
<ellipse cx="355.4" cy="115.8" rx="3.0" ry="2.0" fill="#4e3a10" opacity="0.82"/>
<ellipse cx="347.5" cy="117.8" rx="3.4" ry="0.9" fill="#34280e" opacity="0.89"/>
<ellipse cx="353.2" cy="118.2" rx="4.3" ry="1.2" fill="#34280e" opacity="0.63"/>
<ellipse cx="347.1" cy="120.5" rx="3.3" ry="1.1" fill="#c49a2a" opacity="0.88"/>
<ellipse cx="351.2" cy="118.6" rx="4.0" ry="1.2" fill="#34280e" opacity="0.81"/>
<ellipse cx="349.3" cy="114.4" rx="4.2" ry="0.9" fill="#6c4e12" opacity="0.80"/>
<ellipse cx="347.6" cy="119.5" rx="3.2" ry="1.6" fill="#1e1c0c" opacity="0.77"/>
<ellipse cx="351.6" cy="116.2" rx="1.7" ry="1.1" fill="#b0801e" opacity="0.80"/>
<path d="M318 128 Q335 132 353 142" stroke="#4a4a4a" stroke-width="2.2" fill="none" opacity="0.8"/>
<rect x="353.2" y="0" width="1.8" height="199" fill="#05070a" opacity="0.8"/>
</g>
</symbol>
</defs>
<g clip-path="url(#cl)"><g filter="url(#streak)"><use href="#scene" x="0" y="0" width="355" height="199"/><rect x="191.0" y="32.8" width="61.7" height="1.2" fill="#23261a" opacity="0.21"/>
<rect x="196.4" y="157.7" width="55.6" height="1.2" fill="#23261a" opacity="0.22"/>
<rect x="176.7" y="0.6" width="59.3" height="0.9" fill="#23261a" opacity="0.39"/>
<rect x="170.5" y="46.2" width="32.1" height="1.6" fill="#23261a" opacity="0.37"/>
<rect x="187.7" y="174.1" width="31.7" height="1.1" fill="#23261a" opacity="0.30"/>
<rect x="202.8" y="23.0" width="48.4" height="0.9" fill="#23261a" opacity="0.40"/>
<rect x="201.8" y="24.9" width="52.7" height="1.2" fill="#23261a" opacity="0.25"/>
<rect x="168.4" y="96.5" width="31.9" height="1.5" fill="#23261a" opacity="0.22"/>
<rect x="169.4" y="155.3" width="78.4" height="1.5" fill="#23261a" opacity="0.38"/>
<rect x="186.1" y="151.8" width="66.5" height="0.9" fill="#23261a" opacity="0.29"/>
<rect x="169.0" y="164.6" width="76.2" height="1.5" fill="#23261a" opacity="0.27"/>
<rect x="180.3" y="72.7" width="49.3" height="1.6" fill="#23261a" opacity="0.27"/>
<rect x="164.2" y="5.3" width="65.9" height="1.6" fill="#23261a" opacity="0.30"/>
<rect x="184.8" y="97.8" width="67.4" height="1.0" fill="#23261a" opacity="0.33"/>
<rect x="188.0" y="110.7" width="39.0" height="0.9" fill="#23261a" opacity="0.25"/>
<rect x="175.6" y="184.5" width="59.9" height="1.0" fill="#23261a" opacity="0.18"/>
<rect x="196.6" y="13.1" width="68.9" height="1.1" fill="#23261a" opacity="0.36"/>
<rect x="200.4" y="134.5" width="77.9" height="1.1" fill="#23261a" opacity="0.45"/>
<rect x="186.6" y="191.3" width="74.2" height="1.2" fill="#23261a" opacity="0.26"/>
<rect x="199.4" y="49.2" width="38.1" height="0.9" fill="#23261a" opacity="0.39"/>
<rect x="181.7" y="154.0" width="71.8" height="0.8" fill="#23261a" opacity="0.23"/>
<rect x="178.9" y="57.7" width="38.5" height="0.9" fill="#23261a" opacity="0.25"/>
<rect x="204.3" y="178.9" width="67.3" height="1.2" fill="#23261a" opacity="0.23"/>
<rect x="183.7" y="190.8" width="66.4" height="0.8" fill="#23261a" opacity="0.21"/>
<rect x="195.8" y="166.8" width="74.1" height="1.3" fill="#23261a" opacity="0.28"/>
<rect x="198.2" y="115.6" width="45.4" height="1.2" fill="#23261a" opacity="0.23"/>
<rect x="160.5" y="152.9" width="64.3" height="1.6" fill="#23261a" opacity="0.16"/>
<rect x="189.0" y="118.1" width="72.6" height="1.3" fill="#23261a" opacity="0.23"/>
<rect x="203.1" y="80.7" width="75.3" height="0.9" fill="#23261a" opacity="0.18"/>
<rect x="161.1" y="18.7" width="52.3" height="0.9" fill="#23261a" opacity="0.41"/>
<rect x="165.7" y="130.4" width="56.9" height="1.1" fill="#23261a" opacity="0.30"/>
<rect x="167.5" y="43.7" width="39.2" height="1.1" fill="#23261a" opacity="0.36"/>
<rect x="162.1" y="109.5" width="65.5" height="1.5" fill="#23261a" opacity="0.38"/>
<rect x="160.4" y="157.4" width="53.2" height="0.9" fill="#23261a" opacity="0.38"/>
<rect x="192.0" y="34.9" width="42.6" height="1.4" fill="#23261a" opacity="0.24"/>
<rect x="177.5" y="8.3" width="45.5" height="1.5" fill="#23261a" opacity="0.24"/>
<rect x="184.7" y="100.1" width="77.4" height="0.9" fill="#23261a" opacity="0.33"/>
<rect x="193.1" y="101.1" width="78.4" height="1.0" fill="#23261a" opacity="0.36"/>
<rect x="185.2" y="104.6" width="33.2" height="1.5" fill="#23261a" opacity="0.44"/>
<rect x="174.3" y="70.7" width="79.7" height="0.9" fill="#23261a" opacity="0.17"/>
<rect x="196.6" y="14.6" width="68.0" height="1.2" fill="#23261a" opacity="0.34"/>
<rect x="189.0" y="3.9" width="52.1" height="1.2" fill="#23261a" opacity="0.27"/>
<rect x="170.1" y="79.9" width="32.4" height="1.1" fill="#23261a" opacity="0.22"/>
<rect x="196.8" y="140.1" width="66.2" height="1.2" fill="#23261a" opacity="0.22"/>
<rect x="181.9" y="76.7" width="61.6" height="1.6" fill="#23261a" opacity="0.18"/>
<rect x="182.1" y="95.5" width="65.9" height="1.5" fill="#23261a" opacity="0.38"/>
<rect x="194.1" y="124.7" width="63.4" height="1.5" fill="#23261a" opacity="0.36"/>
<rect x="171.0" y="135.9" width="75.8" height="1.1" fill="#23261a" opacity="0.33"/>
<rect x="203.4" y="164.1" width="79.5" height="0.8" fill="#23261a" opacity="0.24"/>
<rect x="177.6" y="62.0" width="37.3" height="1.2" fill="#23261a" opacity="0.17"/>
<rect x="202.5" y="60.2" width="67.1" height="1.2" fill="#23261a" opacity="0.18"/>
<rect x="191.7" y="190.2" width="40.3" height="1.1" fill="#23261a" opacity="0.34"/>
<rect x="171.7" y="135.6" width="77.6" height="1.1" fill="#23261a" opacity="0.23"/>
<rect x="166.9" y="168.2" width="64.1" height="1.0" fill="#23261a" opacity="0.33"/>
<rect x="177.1" y="55.2" width="77.0" height="1.2" fill="#23261a" opacity="0.28"/>
<rect x="172.6" y="122.8" width="38.7" height="1.1" fill="#23261a" opacity="0.23"/>
<rect x="203.2" y="37.5" width="31.7" height="1.4" fill="#23261a" opacity="0.43"/>
<rect x="160.9" y="140.2" width="55.1" height="0.8" fill="#23261a" opacity="0.33"/>
<rect x="170.8" y="139.4" width="30.4" height="1.2" fill="#23261a" opacity="0.18"/>
<rect x="180.4" y="61.5" width="74.7" height="1.1" fill="#23261a" opacity="0.19"/>
<rect x="197.0" y="157.6" width="56.5" height="0.8" fill="#23261a" opacity="0.21"/>
<rect x="184.8" y="80.2" width="41.3" height="1.4" fill="#23261a" opacity="0.40"/>
<rect x="199.8" y="184.1" width="30.9" height="1.3" fill="#23261a" opacity="0.17"/>
<rect x="193.6" y="179.0" width="68.0" height="1.0" fill="#23261a" opacity="0.17"/>
<rect x="187.3" y="162.2" width="61.0" height="1.2" fill="#23261a" opacity="0.39"/>
<rect x="172.1" y="67.3" width="47.7" height="1.0" fill="#23261a" opacity="0.34"/>
<rect x="163.2" y="177.1" width="33.4" height="1.2" fill="#23261a" opacity="0.35"/>
<rect x="172.1" y="37.8" width="32.9" height="0.8" fill="#23261a" opacity="0.30"/>
<rect x="189.4" y="135.5" width="37.9" height="0.9" fill="#23261a" opacity="0.43"/>
<rect x="178.4" y="107.2" width="64.5" height="1.4" fill="#23261a" opacity="0.31"/>
<rect x="141.4" y="15.6" width="38.5" height="0.8" fill="#b9cadb" opacity="0.24"/>
<rect x="131.4" y="106.0" width="37.0" height="1.3" fill="#b9cadb" opacity="0.27"/>
<rect x="142.5" y="32.2" width="62.3" height="1.4" fill="#b9cadb" opacity="0.32"/>
<rect x="138.9" y="43.2" width="66.1" height="1.2" fill="#b9cadb" opacity="0.38"/>
<rect x="119.5" y="193.1" width="67.7" height="1.5" fill="#b9cadb" opacity="0.35"/>
<rect x="117.6" y="2.2" width="54.5" height="1.2" fill="#b9cadb" opacity="0.34"/>
<rect x="108.1" y="128.7" width="67.2" height="1.2" fill="#b9cadb" opacity="0.37"/>
<rect x="149.9" y="41.2" width="52.2" height="1.3" fill="#b9cadb" opacity="0.33"/>
<rect x="118.1" y="175.7" width="33.3" height="1.1" fill="#b9cadb" opacity="0.19"/>
<rect x="140.7" y="107.4" width="44.5" height="0.9" fill="#b9cadb" opacity="0.16"/>
<rect x="129.0" y="84.2" width="31.1" height="1.3" fill="#b9cadb" opacity="0.20"/>
<rect x="146.4" y="21.3" width="50.9" height="1.4" fill="#b9cadb" opacity="0.28"/>
<rect x="112.0" y="24.4" width="47.0" height="1.2" fill="#b9cadb" opacity="0.34"/>
<rect x="132.5" y="149.5" width="40.1" height="1.1" fill="#b9cadb" opacity="0.24"/>
<rect x="113.3" y="97.4" width="51.5" height="1.1" fill="#b9cadb" opacity="0.16"/>
<rect x="129.3" y="163.8" width="62.1" height="1.3" fill="#b9cadb" opacity="0.33"/>
<rect x="118.8" y="197.7" width="45.7" height="0.8" fill="#b9cadb" opacity="0.32"/>
<rect x="128.8" y="115.7" width="69.9" height="0.9" fill="#b9cadb" opacity="0.21"/>
<rect x="140.6" y="146.1" width="49.3" height="0.8" fill="#b9cadb" opacity="0.24"/>
<rect x="125.0" y="164.4" width="48.5" height="1.1" fill="#b9cadb" opacity="0.31"/>
<rect x="134.7" y="119.1" width="64.6" height="1.3" fill="#b9cadb" opacity="0.24"/>
<rect x="139.1" y="49.8" width="61.7" height="1.4" fill="#b9cadb" opacity="0.20"/>
<rect x="144.5" y="168.7" width="33.1" height="1.0" fill="#b9cadb" opacity="0.31"/>
<rect x="141.6" y="29.1" width="40.6" height="1.3" fill="#b9cadb" opacity="0.22"/>
<rect x="110.3" y="43.4" width="49.9" height="1.3" fill="#b9cadb" opacity="0.20"/>
<rect x="116.8" y="136.6" width="56.0" height="1.1" fill="#b9cadb" opacity="0.20"/>
<rect x="102.9" y="28.1" width="57.9" height="1.1" fill="#b9cadb" opacity="0.18"/>
<rect x="132.7" y="175.2" width="30.8" height="1.3" fill="#b9cadb" opacity="0.30"/>
<rect x="125.0" y="88.3" width="68.5" height="1.1" fill="#b9cadb" opacity="0.31"/>
<rect x="118.3" y="126.5" width="43.9" height="1.3" fill="#b9cadb" opacity="0.31"/>
<rect x="125.7" y="90.9" width="38.9" height="1.4" fill="#b9cadb" opacity="0.15"/>
<rect x="122.7" y="128.0" width="38.9" height="1.2" fill="#b9cadb" opacity="0.30"/>
<rect x="124.5" y="17.3" width="36.6" height="1.4" fill="#b9cadb" opacity="0.23"/>
<rect x="110.8" y="65.3" width="31.9" height="0.9" fill="#b9cadb" opacity="0.19"/>
<rect x="142.4" y="124.2" width="38.8" height="0.9" fill="#b9cadb" opacity="0.28"/>
<rect x="120.3" y="23.0" width="60.4" height="0.9" fill="#b9cadb" opacity="0.32"/>
<rect x="104.2" y="107.2" width="39.7" height="1.2" fill="#b9cadb" opacity="0.17"/>
<rect x="128.8" y="40.5" width="62.7" height="1.2" fill="#b9cadb" opacity="0.32"/>
<rect x="115.1" y="1.8" width="42.7" height="1.4" fill="#b9cadb" opacity="0.24"/>
<rect x="101.7" y="156.2" width="49.9" height="1.4" fill="#b9cadb" opacity="0.34"/></g></g>
<g clip-path="url(#cr)"><g filter="url(#streakr)"><use href="#scene" x="0" y="0" width="355" height="199"/></g></g>
</svg><!--/V1-->

<span class="t" style="left:97.1px;top:283px;color:#3c3f45;">Output Preview</span>
<span class="t" style="left:330.7px;top:283px;color:#53575e;transform:scaleX(0.975);">00:00:03 / 00:00:07</span>

<!-- bottom video -->
<!--V2--><svg class="abs" style="left:97.5px;top:306px;" width="354.5" height="199" viewBox="0 0 355 199" preserveAspectRatio="none">
<defs>
<clipPath id="c2"><rect x="0" y="4" width="355" height="190.5"/></clipPath>
<linearGradient id="wg" gradientUnits="userSpaceOnUse" x1="0" y1="0" x2="355" y2="0"><stop offset="0" stop-color="#fff" stop-opacity="0.24"/><stop offset="0.55" stop-color="#fff" stop-opacity="0.2"/><stop offset="0.82" stop-color="#fff" stop-opacity="0.12"/><stop offset="0.88" stop-color="#fff" stop-opacity="0.04"/><stop offset="1" stop-color="#fff" stop-opacity="0.03"/></linearGradient>
</defs>
<rect width="355" height="199" fill="#000"/>
<g clip-path="url(#c2)">
<use href="#scene" x="0" y="4" width="429.5" height="240.8"/>
<path d="M0 -2.5 C 60 -3.5, 120 -7.5, 180 -8.5 S 300 -7.0, 355 -5.5" stroke="#1a2430" stroke-opacity="0.16" stroke-width="1.5" fill="none"/>
<path d="M0 -0.2 C 60 -1.2, 120 -5.2, 180 -6.2 S 300 -4.7, 355 -3.2" stroke="url(#wg)" stroke-width="1.5" fill="none"/>
<path d="M0 2.2 C 60 1.2, 120 -2.8, 180 -3.8 S 300 -2.2, 355 -0.8" stroke="#1a2430" stroke-opacity="0.16" stroke-width="1.5" fill="none"/>
<path d="M0 4.6 C 60 3.5, 120 -0.5, 180 -1.5 S 300 0.0, 355 1.5" stroke="url(#wg)" stroke-width="1.5" fill="none"/>
<path d="M0 7.0 C 60 6.0, 120 2.0, 180 1.0 S 300 2.5, 355 4.0" stroke="#1a2430" stroke-opacity="0.16" stroke-width="1.5" fill="none"/>
<path d="M0 9.3 C 60 8.3, 120 4.3, 180 3.3 S 300 4.8, 355 6.3" stroke="url(#wg)" stroke-width="1.5" fill="none"/>
<path d="M0 11.8 C 60 10.8, 120 6.8, 180 5.8 S 300 7.2, 355 8.8" stroke="#1a2430" stroke-opacity="0.16" stroke-width="1.5" fill="none"/>
<path d="M0 14.1 C 60 13.1, 120 9.1, 180 8.1 S 300 9.6, 355 11.1" stroke="url(#wg)" stroke-width="1.5" fill="none"/>
<path d="M0 16.5 C 60 15.5, 120 11.5, 180 10.5 S 300 12.0, 355 13.5" stroke="#1a2430" stroke-opacity="0.16" stroke-width="1.5" fill="none"/>
<path d="M0 18.8 C 60 17.8, 120 13.8, 180 12.8 S 300 14.3, 355 15.8" stroke="url(#wg)" stroke-width="1.5" fill="none"/>
<path d="M0 21.2 C 60 20.2, 120 16.2, 180 15.2 S 300 16.8, 355 18.2" stroke="#1a2430" stroke-opacity="0.16" stroke-width="1.5" fill="none"/>
<path d="M0 23.6 C 60 22.6, 120 18.6, 180 17.6 S 300 19.1, 355 20.6" stroke="url(#wg)" stroke-width="1.5" fill="none"/>
<path d="M0 26.0 C 60 25.0, 120 21.0, 180 20.0 S 300 21.5, 355 23.0" stroke="#1a2430" stroke-opacity="0.16" stroke-width="1.5" fill="none"/>
<path d="M0 28.3 C 60 27.3, 120 23.3, 180 22.3 S 300 23.8, 355 25.3" stroke="url(#wg)" stroke-width="1.5" fill="none"/>
<path d="M0 30.8 C 60 29.8, 120 25.8, 180 24.8 S 300 26.2, 355 27.8" stroke="#1a2430" stroke-opacity="0.16" stroke-width="1.5" fill="none"/>
<path d="M0 33.0 C 60 32.0, 120 28.1, 180 27.1 S 300 28.6, 355 30.1" stroke="url(#wg)" stroke-width="1.5" fill="none"/>
<path d="M0 35.5 C 60 34.5, 120 30.5, 180 29.5 S 300 31.0, 355 32.5" stroke="#1a2430" stroke-opacity="0.16" stroke-width="1.5" fill="none"/>
<path d="M0 37.8 C 60 36.8, 120 32.8, 180 31.8 S 300 33.3, 355 34.8" stroke="url(#wg)" stroke-width="1.5" fill="none"/>
<path d="M0 40.2 C 60 39.2, 120 35.2, 180 34.2 S 300 35.8, 355 37.2" stroke="#1a2430" stroke-opacity="0.16" stroke-width="1.5" fill="none"/>
<path d="M0 42.5 C 60 41.5, 120 37.5, 180 36.5 S 300 38.0, 355 39.5" stroke="url(#wg)" stroke-width="1.5" fill="none"/>
<path d="M0 45.0 C 60 44.0, 120 40.0, 180 39.0 S 300 40.5, 355 42.0" stroke="#1a2430" stroke-opacity="0.16" stroke-width="1.5" fill="none"/>
<path d="M0 47.3 C 60 46.3, 120 42.3, 180 41.3 S 300 42.8, 355 44.3" stroke="url(#wg)" stroke-width="1.5" fill="none"/>
<path d="M0 49.8 C 60 48.8, 120 44.8, 180 43.8 S 300 45.2, 355 46.8" stroke="#1a2430" stroke-opacity="0.16" stroke-width="1.5" fill="none"/>
<path d="M0 52.0 C 60 51.0, 120 47.0, 180 46.0 S 300 47.5, 355 49.0" stroke="url(#wg)" stroke-width="1.5" fill="none"/>
<path d="M0 54.5 C 60 53.5, 120 49.5, 180 48.5 S 300 50.0, 355 51.5" stroke="#1a2430" stroke-opacity="0.16" stroke-width="1.5" fill="none"/>
<path d="M0 56.8 C 60 55.8, 120 51.8, 180 50.8 S 300 52.3, 355 53.8" stroke="url(#wg)" stroke-width="1.5" fill="none"/>
<path d="M0 59.2 C 60 58.2, 120 54.2, 180 53.2 S 300 54.8, 355 56.2" stroke="#1a2430" stroke-opacity="0.16" stroke-width="1.5" fill="none"/>
<path d="M0 61.5 C 60 60.5, 120 56.5, 180 55.5 S 300 57.0, 355 58.5" stroke="url(#wg)" stroke-width="1.5" fill="none"/>
<path d="M0 64.0 C 60 63.0, 120 59.0, 180 58.0 S 300 59.5, 355 61.0" stroke="#1a2430" stroke-opacity="0.16" stroke-width="1.5" fill="none"/>
<path d="M0 66.3 C 60 65.3, 120 61.3, 180 60.3 S 300 61.8, 355 63.3" stroke="url(#wg)" stroke-width="1.5" fill="none"/>
<path d="M0 68.8 C 60 67.8, 120 63.8, 180 62.8 S 300 64.2, 355 65.8" stroke="#1a2430" stroke-opacity="0.16" stroke-width="1.5" fill="none"/>
<path d="M0 71.0 C 60 70.0, 120 66.0, 180 65.0 S 300 66.5, 355 68.0" stroke="url(#wg)" stroke-width="1.5" fill="none"/>
<path d="M0 73.5 C 60 72.5, 120 68.5, 180 67.5 S 300 69.0, 355 70.5" stroke="#1a2430" stroke-opacity="0.16" stroke-width="1.5" fill="none"/>
<path d="M0 75.8 C 60 74.8, 120 70.8, 180 69.8 S 300 71.3, 355 72.8" stroke="url(#wg)" stroke-width="1.5" fill="none"/>
<path d="M0 78.2 C 60 77.2, 120 73.2, 180 72.2 S 300 73.8, 355 75.2" stroke="#1a2430" stroke-opacity="0.16" stroke-width="1.5" fill="none"/>
<path d="M0 80.5 C 60 79.5, 120 75.5, 180 74.5 S 300 76.0, 355 77.5" stroke="url(#wg)" stroke-width="1.5" fill="none"/>
<path d="M0 83.0 C 60 82.0, 120 78.0, 180 77.0 S 300 78.5, 355 80.0" stroke="#1a2430" stroke-opacity="0.16" stroke-width="1.5" fill="none"/>
<path d="M0 85.3 C 60 84.3, 120 80.3, 180 79.3 S 300 80.8, 355 82.3" stroke="url(#wg)" stroke-width="1.5" fill="none"/>
<path d="M0 87.8 C 60 86.8, 120 82.8, 180 81.8 S 300 83.2, 355 84.8" stroke="#1a2430" stroke-opacity="0.16" stroke-width="1.5" fill="none"/>
<path d="M0 90.0 C 60 89.0, 120 85.0, 180 84.0 S 300 85.5, 355 87.0" stroke="url(#wg)" stroke-width="1.5" fill="none"/>
<path d="M0 92.5 C 60 91.5, 120 87.5, 180 86.5 S 300 88.0, 355 89.5" stroke="#1a2430" stroke-opacity="0.16" stroke-width="1.5" fill="none"/>
<path d="M0 94.8 C 60 93.8, 120 89.8, 180 88.8 S 300 90.3, 355 91.8" stroke="url(#wg)" stroke-width="1.5" fill="none"/>
<path d="M0 97.2 C 60 96.2, 120 92.2, 180 91.2 S 300 92.8, 355 94.2" stroke="#1a2430" stroke-opacity="0.16" stroke-width="1.5" fill="none"/>
<path d="M0 99.5 C 60 98.5, 120 94.5, 180 93.5 S 300 95.0, 355 96.5" stroke="url(#wg)" stroke-width="1.5" fill="none"/>
<path d="M0 102.0 C 60 101.0, 120 97.0, 180 96.0 S 300 97.5, 355 99.0" stroke="#1a2430" stroke-opacity="0.16" stroke-width="1.5" fill="none"/>
<path d="M0 104.3 C 60 103.3, 120 99.3, 180 98.3 S 300 99.8, 355 101.3" stroke="url(#wg)" stroke-width="1.5" fill="none"/>
<path d="M0 106.8 C 60 105.8, 120 101.8, 180 100.8 S 300 102.2, 355 103.8" stroke="#1a2430" stroke-opacity="0.16" stroke-width="1.5" fill="none"/>
<path d="M0 109.0 C 60 108.0, 120 104.0, 180 103.0 S 300 104.5, 355 106.0" stroke="url(#wg)" stroke-width="1.5" fill="none"/>
<path d="M0 111.5 C 60 110.5, 120 106.5, 180 105.5 S 300 107.0, 355 108.5" stroke="#1a2430" stroke-opacity="0.16" stroke-width="1.5" fill="none"/>
<path d="M0 113.8 C 60 112.8, 120 108.8, 180 107.8 S 300 109.3, 355 110.8" stroke="url(#wg)" stroke-width="1.5" fill="none"/>
<path d="M0 116.2 C 60 115.2, 120 111.2, 180 110.2 S 300 111.8, 355 113.2" stroke="#1a2430" stroke-opacity="0.16" stroke-width="1.5" fill="none"/>
<path d="M0 118.5 C 60 117.5, 120 113.5, 180 112.5 S 300 114.0, 355 115.5" stroke="url(#wg)" stroke-width="1.5" fill="none"/>
<path d="M0 121.0 C 60 120.0, 120 116.0, 180 115.0 S 300 116.5, 355 118.0" stroke="#1a2430" stroke-opacity="0.16" stroke-width="1.5" fill="none"/>
<path d="M0 123.3 C 60 122.3, 120 118.3, 180 117.3 S 300 118.8, 355 120.3" stroke="url(#wg)" stroke-width="1.5" fill="none"/>
<path d="M0 125.8 C 60 124.8, 120 120.8, 180 119.8 S 300 121.2, 355 122.8" stroke="#1a2430" stroke-opacity="0.16" stroke-width="1.5" fill="none"/>
<path d="M0 128.1 C 60 127.0, 120 123.0, 180 122.0 S 300 123.5, 355 125.0" stroke="url(#wg)" stroke-width="1.5" fill="none"/>
<path d="M0 130.5 C 60 129.5, 120 125.5, 180 124.5 S 300 126.0, 355 127.5" stroke="#1a2430" stroke-opacity="0.16" stroke-width="1.5" fill="none"/>
<path d="M0 132.8 C 60 131.8, 120 127.8, 180 126.8 S 300 128.3, 355 129.8" stroke="url(#wg)" stroke-width="1.5" fill="none"/>
<path d="M0 135.2 C 60 134.2, 120 130.2, 180 129.2 S 300 130.8, 355 132.2" stroke="#1a2430" stroke-opacity="0.16" stroke-width="1.5" fill="none"/>
<path d="M0 137.6 C 60 136.6, 120 132.6, 180 131.6 S 300 133.1, 355 134.6" stroke="url(#wg)" stroke-width="1.5" fill="none"/>
<path d="M0 140.0 C 60 139.0, 120 135.0, 180 134.0 S 300 135.5, 355 137.0" stroke="#1a2430" stroke-opacity="0.16" stroke-width="1.5" fill="none"/>
<path d="M0 142.3 C 60 141.3, 120 137.3, 180 136.3 S 300 137.8, 355 139.3" stroke="url(#wg)" stroke-width="1.5" fill="none"/>
<path d="M0 144.8 C 60 143.8, 120 139.8, 180 138.8 S 300 140.2, 355 141.8" stroke="#1a2430" stroke-opacity="0.16" stroke-width="1.5" fill="none"/>
<path d="M0 147.1 C 60 146.1, 120 142.1, 180 141.1 S 300 142.6, 355 144.1" stroke="url(#wg)" stroke-width="1.5" fill="none"/>
<path d="M0 149.5 C 60 148.5, 120 144.5, 180 143.5 S 300 145.0, 355 146.5" stroke="#1a2430" stroke-opacity="0.16" stroke-width="1.5" fill="none"/>
<path d="M0 151.8 C 60 150.8, 120 146.8, 180 145.8 S 300 147.3, 355 148.8" stroke="url(#wg)" stroke-width="1.5" fill="none"/>
<path d="M0 154.2 C 60 153.2, 120 149.2, 180 148.2 S 300 149.8, 355 151.2" stroke="#1a2430" stroke-opacity="0.16" stroke-width="1.5" fill="none"/>
<path d="M0 156.6 C 60 155.6, 120 151.6, 180 150.6 S 300 152.1, 355 153.6" stroke="url(#wg)" stroke-width="1.5" fill="none"/>
<path d="M0 159.0 C 60 158.0, 120 154.0, 180 153.0 S 300 154.5, 355 156.0" stroke="#1a2430" stroke-opacity="0.16" stroke-width="1.5" fill="none"/>
<path d="M0 161.3 C 60 160.3, 120 156.3, 180 155.3 S 300 156.8, 355 158.3" stroke="url(#wg)" stroke-width="1.5" fill="none"/>
<path d="M0 163.8 C 60 162.8, 120 158.8, 180 157.8 S 300 159.2, 355 160.8" stroke="#1a2430" stroke-opacity="0.16" stroke-width="1.5" fill="none"/>
<path d="M0 166.1 C 60 165.1, 120 161.1, 180 160.1 S 300 161.6, 355 163.1" stroke="url(#wg)" stroke-width="1.5" fill="none"/>
<path d="M0 168.5 C 60 167.5, 120 163.5, 180 162.5 S 300 164.0, 355 165.5" stroke="#1a2430" stroke-opacity="0.16" stroke-width="1.5" fill="none"/>
<path d="M0 170.8 C 60 169.8, 120 165.8, 180 164.8 S 300 166.3, 355 167.8" stroke="url(#wg)" stroke-width="1.5" fill="none"/>
<path d="M0 173.2 C 60 172.2, 120 168.2, 180 167.2 S 300 168.8, 355 170.2" stroke="#1a2430" stroke-opacity="0.16" stroke-width="1.5" fill="none"/>
<path d="M0 175.6 C 60 174.6, 120 170.6, 180 169.6 S 300 171.1, 355 172.6" stroke="url(#wg)" stroke-width="1.5" fill="none"/>
<path d="M0 178.0 C 60 177.0, 120 173.0, 180 172.0 S 300 173.5, 355 175.0" stroke="#1a2430" stroke-opacity="0.16" stroke-width="1.5" fill="none"/>
<path d="M0 180.3 C 60 179.3, 120 175.3, 180 174.3 S 300 175.8, 355 177.3" stroke="url(#wg)" stroke-width="1.5" fill="none"/>
<path d="M0 182.8 C 60 181.8, 120 177.8, 180 176.8 S 300 178.2, 355 179.8" stroke="#1a2430" stroke-opacity="0.16" stroke-width="1.5" fill="none"/>
<path d="M0 185.1 C 60 184.1, 120 180.1, 180 179.1 S 300 180.6, 355 182.1" stroke="url(#wg)" stroke-width="1.5" fill="none"/>
<path d="M0 187.5 C 60 186.5, 120 182.5, 180 181.5 S 300 183.0, 355 184.5" stroke="#1a2430" stroke-opacity="0.16" stroke-width="1.5" fill="none"/>
<path d="M0 189.8 C 60 188.8, 120 184.8, 180 183.8 S 300 185.3, 355 186.8" stroke="url(#wg)" stroke-width="1.5" fill="none"/>
<path d="M0 192.2 C 60 191.2, 120 187.2, 180 186.2 S 300 187.8, 355 189.2" stroke="#1a2430" stroke-opacity="0.16" stroke-width="1.5" fill="none"/>
<path d="M0 194.6 C 60 193.6, 120 189.6, 180 188.6 S 300 190.1, 355 191.6" stroke="url(#wg)" stroke-width="1.5" fill="none"/>
<path d="M0 197.0 C 60 196.0, 120 192.0, 180 191.0 S 300 192.5, 355 194.0" stroke="#1a2430" stroke-opacity="0.16" stroke-width="1.5" fill="none"/>
<path d="M0 199.3 C 60 198.3, 120 194.3, 180 193.3 S 300 194.8, 355 196.3" stroke="url(#wg)" stroke-width="1.5" fill="none"/>
<path d="M0 201.8 C 60 200.8, 120 196.8, 180 195.8 S 300 197.2, 355 198.8" stroke="#1a2430" stroke-opacity="0.16" stroke-width="1.5" fill="none"/>
<path d="M0 204.1 C 60 203.1, 120 199.1, 180 198.1 S 300 199.6, 355 201.1" stroke="url(#wg)" stroke-width="1.5" fill="none"/>
<path d="M0 206.5 C 60 205.5, 120 201.5, 180 200.5 S 300 202.0, 355 203.5" stroke="#1a2430" stroke-opacity="0.16" stroke-width="1.5" fill="none"/>
<path d="M0 208.8 C 60 207.8, 120 203.8, 180 202.8 S 300 204.3, 355 205.8" stroke="url(#wg)" stroke-width="1.5" fill="none"/>
<path d="M0 211.2 C 60 210.2, 120 206.2, 180 205.2 S 300 206.8, 355 208.2" stroke="#1a2430" stroke-opacity="0.16" stroke-width="1.5" fill="none"/>
<path d="M0 213.6 C 60 212.6, 120 208.6, 180 207.6 S 300 209.1, 355 210.6" stroke="url(#wg)" stroke-width="1.5" fill="none"/>
</g>
</svg><!--/V2-->

<!-- controls -->
<div id="ctrl" class="abs"></div>
<svg class="abs" style="left:97px;top:505px;" width="355" height="42" viewBox="0 0 355 42">
  <g fill="#6e74a2" stroke="#6e74a2" stroke-width="2" stroke-linejoin="round">
    <rect x="20.2" y="15.3" width="2.2" height="11.4" rx="1.1" stroke="none"/>
    <path d="M30 17 L30 25 L25 21 Z"/>
    <rect x="48.8" y="15.2" width="3.8" height="11.8" rx="0.9" stroke="none"/>
    <rect x="55.2" y="15.2" width="3.8" height="11.8" rx="0.9" stroke="none"/>
    <path d="M78 17 L78 25 L83 21 Z"/>
    <rect x="85.6" y="15.3" width="2.2" height="11.4" rx="1.1" stroke="none"/>
  </g>
  <rect x="108" y="19" width="221.5" height="4.4" rx="2.2" fill="#c9c9c9"/>
  <rect x="108" y="19" width="108" height="4.4" rx="2.2" fill="#0b3be2"/>
  <circle cx="216" cy="21.2" r="4.2" fill="#fff" stroke="#1d46cf" stroke-width="2"/>
</svg>

<!-- right card -->
<div id="rcard" class="abs card"></div>

<span class="t b" style="left:488px;top:88px;">Volume</span>
<div class="row" style="top:112px;"></div><div class="num" style="top:112px;"></div>
<div class="trk" style="top:123px;"></div><div class="fill" style="left:496px;top:123px;width:70px;"></div>
<div class="th" style="left:562.7px;top:120.5px;"></div>
<span class="t" style="left:657.3px;top:116.6px;color:#333;">100</span>

<span class="t b" style="left:488.4px;top:163px;transform:scaleX(1.01);">Stereo</span>
<div class="row" style="top:187.5px;"></div><div class="num" style="top:187.5px;"></div>
<div class="trk" style="top:198.5px;"></div>
<div class="th" style="left:496.7px;top:196px;"></div>
<span class="t" style="left:657px;top:191.5px;color:#333;">0</span>

<span class="t b" style="left:488px;top:239px;transform:scaleX(0.992);">Enhance Human Voice</span>
<div class="row" style="top:263px;"></div><div class="num" style="top:263px;"></div>
<div class="trk" style="top:274px;"></div>
<div class="th" style="left:496.7px;top:271.5px;"></div>
<span class="t" style="left:657px;top:267px;color:#333;">0</span>

<svg class="abs" style="left:696px;top:110px;" width="10" height="185" viewBox="0 0 10 185">
  <g fill="#8d9098"><path d="M2 8.8 L4.6 6.3 L7.2 8.8Z"/><path d="M2 19.4 L4.6 21.9 L7.2 19.4Z"/><path d="M2 84.2 L4.6 81.7 L7.2 84.2Z"/><path d="M2 94.9 L4.6 97.4 L7.2 94.9Z"/><path d="M2 159.7 L4.6 157.2 L7.2 159.7Z"/><path d="M2 170.4 L4.6 172.9 L7.2 170.4Z"/></g>
</svg>

<span class="t b" style="left:496.5px;top:322px;transform:scaleX(0.985);">Denoise</span>
<div class="abs" style="left:496px;top:346.8px;width:9.6px;height:9.6px;border:1px solid #d9dade;background:#f5f5f7;border-radius:1px;"></div>
<span class="t" style="left:517px;top:345.3px;color:#333;transform:scaleX(0.953);">Remove Background Noise</span>

<div class="abs" style="left:576.3px;top:503.5px;width:79.2px;height:24.6px;background:#e8ebf9;border-radius:5px 0 0 5px;"></div>
<div class="abs" style="left:655.2px;top:503.5px;width:54.8px;height:24.6px;background:#ebeefa;border-radius:0 5px 5px 0;"></div>
<span class="t" style="left:585.3px;top:507.8px;color:#a9adb9;transform:scaleX(0.95);">Apply to All</span>
<svg class="abs" style="left:676px;top:509px;" width="15" height="15" viewBox="0 0 15 15">
  <g fill="none" stroke="#9ea1ab" stroke-width="1.6">
    <path d="M2.6 8.6 A5 5 0 0 1 10.2 3.2"/>
    <path d="M12.4 6.4 A5 5 0 0 1 4.8 11.8"/>
  </g>
  <path d="M9.2 1.4 L12.4 3.6 L9 5.2Z" fill="#9ea1ab"/>
  <path d="M5.8 13.6 L2.6 11.4 L6 9.8Z" fill="#9ea1ab"/>
</svg>

<div class="btn" style="left:490.5px;width:113px;"></div>
<div class="btn" style="left:615px;width:113px;"></div>
<span class="t" style="left:536.4px;top:570px;font-size:16px;color:#2c3a9c;transform:scaleX(0.925);">OK</span>
<span class="t" style="left:649.3px;top:570px;font-size:16px;color:#2c3a9c;transform:scaleX(0.875);">Cancel</span>
</body>
</html>
